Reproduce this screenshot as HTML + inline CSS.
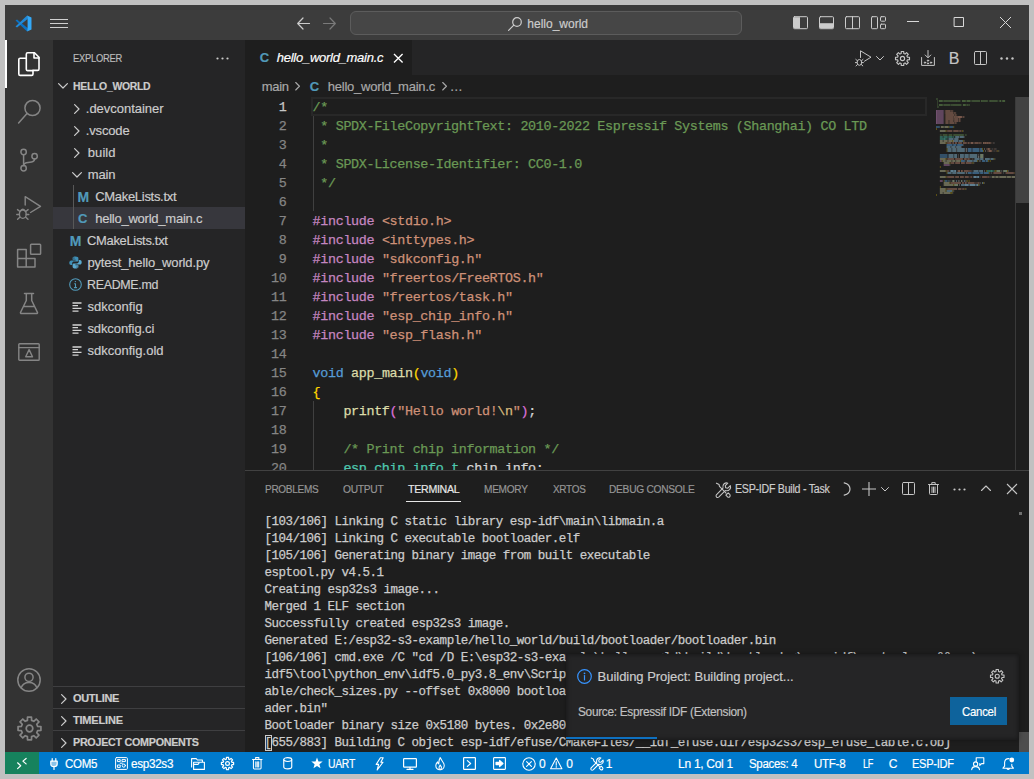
<!DOCTYPE html>
<html lang="en">
<head>
<meta charset="utf-8">
<title>hello_world_main.c - hello_world - Visual Studio Code</title>
<style>
*{box-sizing:border-box;margin:0;padding:0}
html,body{width:1034px;height:779px;overflow:hidden;background:#c1c1c1}
body{font-family:"Liberation Sans",sans-serif;font-size:13px;color:#ccc;position:relative}
.abs{position:absolute}
svg{position:absolute;overflow:visible}
.t{position:absolute;white-space:pre;transform-origin:0 50%;-webkit-text-stroke:.18px}
pre{position:absolute;font-family:"Liberation Mono",monospace;white-space:pre;-webkit-text-stroke:.25px}
#code{left:312.6px;top:98px;font-size:13.4px;line-height:19px;letter-spacing:-0.34px;color:#d4d4d4}
#ln{left:245px;top:98px;width:41.5px;text-align:right;font-size:13.4px;line-height:19px;letter-spacing:-0.34px;color:#858585}
#term{left:264.6px;top:514px;font-size:12.5px;line-height:17px;letter-spacing:-0.5px;color:#ccc}
.c{color:#6a9955}.k{color:#c586c0}.s{color:#ce9178}.b{color:#569cd6}.f{color:#dcdcaa}.y{color:#ffd700}.p{color:#da70d6}.e{color:#d7ba7d}.ty{color:#4ec9b0}.v{color:#9cdcfe}
</style>
</head>
<body>
<div class="abs" style="left:5px;top:5px;width:1024px;height:769px;background:#1e1e1e;"></div>
<div class="abs" style="left:5px;top:5px;width:1024px;height:35px;background:#3c3c3c;"></div>
<div class="abs" style="left:5px;top:40px;width:48px;height:712px;background:#333333;"></div>
<div class="abs" style="left:53px;top:40px;width:192px;height:712px;background:#252526;"></div>
<div class="abs" style="left:245px;top:40px;width:784px;height:35px;background:#252526;"></div>
<div class="abs" style="left:245px;top:40px;width:167px;height:35px;background:#1e1e1e;"></div>
<div class="abs" style="left:5px;top:752px;width:1024px;height:22px;background:#007acc;"></div>
<div class="abs" style="left:5px;top:752px;width:34px;height:22px;background:#16825d;"></div>
<svg style="left:14.5px;top:14.5px" width="17" height="17" viewBox="0 0 100 100" fill="none" stroke="none" stroke-width="1" stroke-linecap="round" stroke-linejoin="round"><path d="M3 32L12 27L74 76L71 97Z" fill="#0a72c4" stroke="none"/><path d="M3 68L12 73L74 24L71 3Z" fill="#2089d8" stroke="none"/><path d="M71 3L97 15V85L71 97L74 72V28Z" fill="#33a9f8" stroke="none"/></svg>
<svg style="left:50px;top:15px" width="18" height="16" viewBox="0 0 18 16" fill="none" stroke="#d0d0d0" stroke-width="1" stroke-linecap="butt" stroke-linejoin="round"><path d="M0 4.5H18M0 8.5H18M0 12.5H18"/></svg>
<svg style="left:297px;top:17px" width="13" height="13" viewBox="0 0 13 13" fill="none" stroke="#cccccc" stroke-width="1.2" stroke-linecap="round" stroke-linejoin="round"><path d="M12.5 6.5H1M6 1L0.7 6.5L6 12"/></svg>
<svg style="left:323px;top:17px" width="13" height="13" viewBox="0 0 13 13" fill="none" stroke="#7a7a7a" stroke-width="1.2" stroke-linecap="round" stroke-linejoin="round"><path d="M0.5 6.5H12M7 1L12.3 6.5L7 12"/></svg>
<div class="abs" style="left:350px;top:11px;width:392px;height:24px;background:#464646;border:1px solid #5c5c5c;border-radius:6px"></div>
<svg style="left:508px;top:16.5px" width="14" height="14" viewBox="0 0 14 14" fill="none" stroke="#cccccc" stroke-width="1.2" stroke-linecap="round" stroke-linejoin="round"><circle cx="9" cy="5" r="4.3"/><path d="M5.8 8.2L0.6 13.4"/></svg>
<span class="t" style="left:527.30px;top:15.6px;font-size:12px;line-height:17px;letter-spacing:-0.003px;color:#cccccc;">hello_world</span>
<svg style="left:792.5px;top:16px" width="15" height="13.4" viewBox="0 0 15 13" fill="none" stroke="#cccccc" stroke-width="1" stroke-linecap="round" stroke-linejoin="round"><rect x=".5" y=".5" width="14" height="12" rx="1"/><path d="M1 1H7V12H1Z" fill="#cccccc" stroke="none"/></svg>
<svg style="left:818.5px;top:16px" width="15" height="13.4" viewBox="0 0 15 13" fill="none" stroke="#cccccc" stroke-width="1" stroke-linecap="round" stroke-linejoin="round"><rect x=".5" y=".5" width="14" height="12" rx="1"/><path d="M1 7H14V12H1Z" fill="#cccccc" stroke="none"/></svg>
<svg style="left:844.5px;top:16px" width="15" height="13.4" viewBox="0 0 15 13" fill="none" stroke="#cccccc" stroke-width="1" stroke-linecap="round" stroke-linejoin="round"><rect x=".5" y=".5" width="14" height="12" rx="1"/><path d="M7.5 .5V12.5"/></svg>
<svg style="left:871px;top:16px" width="15" height="13.4" viewBox="0 0 15 13" fill="none" stroke="#cccccc" stroke-width="1" stroke-linecap="round" stroke-linejoin="round"><rect x=".5" y=".5" width="6" height="12" rx=".8"/><rect x="9.5" y=".5" width="5" height="4.5" rx=".8"/><rect x="9.5" y="8" width="5" height="4.5" rx=".8"/></svg>
<svg style="left:906.5px;top:21px" width="12" height="2" viewBox="0 0 12 2" fill="none" stroke="#d8d8d8" stroke-width="1" stroke-linecap="butt" stroke-linejoin="round"><path d="M0 .5H12"/></svg>
<svg style="left:953.5px;top:17px" width="10" height="10" viewBox="0 0 10 10" fill="none" stroke="#d8d8d8" stroke-width="1" stroke-linecap="round" stroke-linejoin="round"><rect x=".5" y=".5" width="9" height="9"/></svg>
<svg style="left:1000px;top:17px" width="11" height="11" viewBox="0 0 11 11" fill="none" stroke="#d8d8d8" stroke-width="1" stroke-linecap="butt" stroke-linejoin="round"><path d="M0 0L11 11M11 0L0 11"/></svg>
<div class="abs" style="left:5px;top:40px;width:2px;height:48px;background:#ffffff;"></div>
<svg style="left:17px;top:51px" width="24" height="26" viewBox="0 0 24 26" fill="none" stroke="#ffffff" stroke-width="1.6" stroke-linecap="round" stroke-linejoin="round"><path d="M9.3 6.8V3.2Q9.3 1.8 10.7 1.8H17.5L22 6.3V18Q22 19.4 20.6 19.4H16"/><path d="M17 2V7H22"/><path d="M9.3 7.2H3.2Q1.8 7.2 1.8 8.6V23Q1.8 24.4 3.2 24.4H14.6Q16 24.4 16 23V19.6H10.7Q9.3 19.6 9.3 18.2Z"/></svg>
<svg style="left:17px;top:98px" width="26" height="26" viewBox="0 0 26 26" fill="none" stroke="#858585" stroke-width="1.5" stroke-linecap="round" stroke-linejoin="round"><circle cx="15.5" cy="10" r="7.6"/><path d="M10 15.6L1.6 25"/></svg>
<svg style="left:19px;top:147px" width="20" height="26" viewBox="0 0 20 26" fill="none" stroke="#858585" stroke-width="1.5" stroke-linecap="round" stroke-linejoin="round"><circle cx="4.6" cy="5" r="2.7"/><circle cx="15.6" cy="9.2" r="2.7"/><circle cx="4.6" cy="21.2" r="2.7"/><path d="M4.6 7.7V18.5"/><path d="M15.6 11.9Q15.4 14.6 12.6 15L7.4 15.8Q4.8 16.4 4.6 18.5"/></svg>
<svg style="left:16px;top:195px" width="26" height="26" viewBox="0 0 26 26" fill="none" stroke="#858585" stroke-width="1.4" stroke-linecap="round" stroke-linejoin="round"><path d="M9.2 10V1.7L24.5 11.3L14.5 17.5"/><ellipse cx="6.8" cy="19.2" rx="3.4" ry="4.2"/><path d="M3.6 16.3L1.5 14.6M10 16.3L12.1 14.6M3.4 19.5H.8M10.2 19.5H12.8M3.8 22.2L1.6 24.2M9.8 22.2L12 24.2M4.8 15.6Q6.8 12.8 8.8 15.6"/></svg>
<svg style="left:16px;top:243px" width="26" height="25" viewBox="0 0 26 25" fill="none" stroke="#858585" stroke-width="1.5" stroke-linecap="round" stroke-linejoin="round"><path d="M1.6 6.6H10.2V15.4H19V24H1.6ZM1.6 15.4H10.2V24"/><rect x="14.6" y="1.2" width="10" height="10" rx=".8"/></svg>
<svg style="left:19px;top:292px" width="20" height="23" viewBox="0 0 20 23" fill="none" stroke="#858585" stroke-width="1.5" stroke-linecap="round" stroke-linejoin="round"><path d="M5.5 1.5H14.5M7.3 1.5V8.5L1.5 20.5Q1.2 21.6 2.5 21.6H17.5Q18.8 21.6 18.5 20.5L12.7 8.5V1.5M4.5 14.5H15.5"/></svg>
<svg style="left:18px;top:343px" width="22" height="18" viewBox="0 0 22 18" fill="none" stroke="#858585" stroke-width="1.4" stroke-linecap="round" stroke-linejoin="round"><rect x=".8" y=".8" width="20.4" height="16.4" rx=".8"/><path d="M.8 4.6H21.2"/><path d="M11.1 6.6L14.5 13.8H7.7Z"/></svg>
<svg style="left:17px;top:668px" width="24" height="24" viewBox="0 0 24 24" fill="none" stroke="#858585" stroke-width="1.5" stroke-linecap="round" stroke-linejoin="round"><circle cx="12" cy="12" r="11.2"/><circle cx="12" cy="9.3" r="4.1"/><path d="M4.2 19.8Q6 14.6 12 14.6Q18 14.6 19.8 19.8"/></svg>
<svg style="left:16.5px;top:716px" width="25" height="25" viewBox="0 0 25 25" fill="none" stroke="#858585" stroke-width="1.7" stroke-linecap="round" stroke-linejoin="round"><path d="M20.64 10.41L23.93 10.53L23.93 14.47L20.64 14.59L19.73 16.78L21.98 19.19L19.19 21.98L16.78 19.73L14.59 20.64L14.47 23.93L10.53 23.93L10.41 20.64L8.22 19.73L5.81 21.98L3.02 19.19L5.27 16.78L4.36 14.59L1.07 14.47L1.07 10.53L4.36 10.41L5.27 8.22L3.02 5.81L5.81 3.02L8.22 5.27L10.41 4.36L10.53 1.07L14.47 1.07L14.59 4.36L16.78 5.27L19.19 3.02L21.98 5.81L19.73 8.22Z"/><circle cx="12.5" cy="12.5" r="3.3"/></svg>
<span class="t" style="left:73.30px;top:50.7px;font-size:11px;line-height:15px;letter-spacing:-0.300px;color:#bbbbbb;transform:scaleX(0.8520);">EXPLORER</span>
<svg style="left:215.5px;top:57px" width="13" height="3" viewBox="0 0 13 3" fill="#cccccc" stroke="none" stroke-width="1" stroke-linecap="round" stroke-linejoin="round"><circle cx="1.5" cy="1.5" r="1.1"/><circle cx="6.5" cy="1.5" r="1.1"/><circle cx="11.5" cy="1.5" r="1.1"/></svg>
<svg style="left:58px;top:83px" width="10" height="6" viewBox="0 0 10 6" fill="none" stroke="#cccccc" stroke-width="1.2" stroke-linecap="round" stroke-linejoin="round"><path d="M.6 .6L5 5L9.4 .6"/></svg>
<span class="t" style="left:73.30px;top:79.1px;font-size:11px;line-height:15px;letter-spacing:-0.300px;color:#cccccc;font-weight:700;transform:scaleX(0.9476);">HELLO_WORLD</span>
<svg style="left:74px;top:103.5px" width="6" height="10" viewBox="0 0 6 10" fill="none" stroke="#cccccc" stroke-width="1.2" stroke-linecap="round" stroke-linejoin="round"><path d="M.6 .6L5 5L.6 9.4"/></svg>
<span class="t" style="left:85.80px;top:99.9px;font-size:13px;line-height:18px;letter-spacing:-0.027px;color:#cccccc;">.devcontainer</span>
<svg style="left:74px;top:125.5px" width="6" height="10" viewBox="0 0 6 10" fill="none" stroke="#cccccc" stroke-width="1.2" stroke-linecap="round" stroke-linejoin="round"><path d="M.6 .6L5 5L.6 9.4"/></svg>
<span class="t" style="left:85.80px;top:121.9px;font-size:13px;line-height:18px;letter-spacing:-0.162px;color:#cccccc;">.vscode</span>
<svg style="left:74px;top:147.5px" width="6" height="10" viewBox="0 0 6 10" fill="none" stroke="#cccccc" stroke-width="1.2" stroke-linecap="round" stroke-linejoin="round"><path d="M.6 .6L5 5L.6 9.4"/></svg>
<span class="t" style="left:87.80px;top:143.9px;font-size:13px;line-height:18px;letter-spacing:0.066px;color:#cccccc;">build</span>
<svg style="left:71.5px;top:172px" width="10" height="6" viewBox="0 0 10 6" fill="none" stroke="#cccccc" stroke-width="1.2" stroke-linecap="round" stroke-linejoin="round"><path d="M.6 .6L5 5L9.4 .6"/></svg>
<span class="t" style="left:87.80px;top:165.9px;font-size:13px;line-height:18px;letter-spacing:-0.149px;color:#cccccc;">main</span>
<div class="abs" style="left:53px;top:207px;width:192px;height:22px;background:#37373d;"></div>
<div class="abs" style="left:73px;top:185px;width:1px;height:44px;background:#585858;"></div>
<span class="t" style="left:77.50px;top:186.8px;font-size:14px;line-height:20px;letter-spacing:0.000px;color:#519aba;font-weight:700;">M</span>
<span class="t" style="left:95.20px;top:187.9px;font-size:13px;line-height:18px;letter-spacing:-0.300px;color:#cccccc;">CMakeLists.txt</span>
<span class="t" style="left:78.10px;top:210.1px;font-size:13px;line-height:18px;letter-spacing:0.000px;color:#519aba;font-weight:700;">C</span>
<span class="t" style="left:95.20px;top:209.9px;font-size:13px;line-height:18px;letter-spacing:-0.240px;color:#cccccc;">hello_world_main.c</span>
<span class="t" style="left:69.70px;top:230.8px;font-size:14px;line-height:20px;letter-spacing:0.000px;color:#519aba;font-weight:700;">M</span>
<span class="t" style="left:87.40px;top:231.9px;font-size:13px;line-height:18px;letter-spacing:-0.300px;color:#cccccc;transform:scaleX(0.9947);">CMakeLists.txt</span>
<svg style="left:69px;top:255.5px" width="13" height="13" viewBox="0 0 13 13" fill="none" stroke="none" stroke-width="1" stroke-linecap="round" stroke-linejoin="round"><path d="M6.4 .4C3.6 .4 3.6 1.6 3.6 2.4V3.8H6.6V4.4H2.2C1 4.4 .3 5.4 .3 6.8C.3 8.2 1 9 2 9H3.2V7.4C3.2 6.2 4.2 5.6 5 5.6H8C8.9 5.6 9.4 5 9.4 4.2V2.2C9.4 1.2 8.6 .4 6.4 .4ZM4.9 1.4A.6 .6 0 1 1 4.9 2.6A.6 .6 0 1 1 4.9 1.4Z" fill="#3f8fb6" fill-rule="evenodd" stroke="none"/><path d="M6.6 12.6C9.4 12.6 9.4 11.4 9.4 10.6V9.2H6.4V8.6H10.8C12 8.6 12.7 7.6 12.7 6.2C12.7 4.8 12 4 11 4H9.8V5.6C9.8 6.8 8.8 7.4 8 7.4H5C4.1 7.4 3.6 8 3.6 8.8V10.8C3.6 11.8 4.4 12.6 6.6 12.6ZM8.1 11.6A.6 .6 0 1 1 8.1 10.4A.6 .6 0 1 1 8.1 11.6Z" fill="#5aa9cf" fill-rule="evenodd" stroke="none"/></svg>
<span class="t" style="left:87.40px;top:253.9px;font-size:13px;line-height:18px;letter-spacing:-0.146px;color:#cccccc;">pytest_hello_world.py</span>
<svg style="left:69px;top:278px" width="13" height="13" viewBox="0 0 13 13" fill="none" stroke="#519aba" stroke-width="1.1" stroke-linecap="round" stroke-linejoin="round"><circle cx="6.5" cy="6.5" r="5.8"/><path d="M6.5 5.8V9.6M5.4 9.6H7.6M5.6 5.8H6.5"/><circle cx="6.4" cy="3.6" r=".7" fill="#519aba" stroke="none"/></svg>
<span class="t" style="left:87.15px;top:275.9px;font-size:13px;line-height:18px;letter-spacing:-0.300px;color:#cccccc;transform:scaleX(0.9544);">README.md</span>
<svg style="left:72px;top:301.5px" width="10" height="10" viewBox="0 0 10 10" fill="none" stroke="#d4d4d4" stroke-width="1.3" stroke-linecap="butt" stroke-linejoin="round"><path d="M.5 1H9.5M.5 3.7H6M.5 6.4H9.5M.5 9.1H6.5"/></svg>
<span class="t" style="left:87.40px;top:297.9px;font-size:13px;line-height:18px;letter-spacing:0.039px;color:#cccccc;">sdkconfig</span>
<svg style="left:72px;top:323.5px" width="10" height="10" viewBox="0 0 10 10" fill="none" stroke="#d4d4d4" stroke-width="1.3" stroke-linecap="butt" stroke-linejoin="round"><path d="M.5 1H9.5M.5 3.7H6M.5 6.4H9.5M.5 9.1H6.5"/></svg>
<span class="t" style="left:87.40px;top:319.9px;font-size:13px;line-height:18px;letter-spacing:-0.085px;color:#cccccc;">sdkconfig.ci</span>
<svg style="left:72px;top:345.5px" width="10" height="10" viewBox="0 0 10 10" fill="none" stroke="#d4d4d4" stroke-width="1.3" stroke-linecap="butt" stroke-linejoin="round"><path d="M.5 1H9.5M.5 3.7H6M.5 6.4H9.5M.5 9.1H6.5"/></svg>
<span class="t" style="left:87.40px;top:341.9px;font-size:13px;line-height:18px;letter-spacing:0.021px;color:#cccccc;">sdkconfig.old</span>
<div class="abs" style="left:53px;top:686px;width:192px;height:1px;background:#3f3f41;"></div>
<div class="abs" style="left:53px;top:708px;width:192px;height:1px;background:#3f3f41;"></div>
<div class="abs" style="left:53px;top:730px;width:192px;height:1px;background:#3f3f41;"></div>
<svg style="left:61px;top:693.5px" width="6" height="10" viewBox="0 0 6 10" fill="none" stroke="#cccccc" stroke-width="1.2" stroke-linecap="round" stroke-linejoin="round"><path d="M.6 .6L5 5L.6 9.4"/></svg>
<span class="t" style="left:72.90px;top:691.4px;font-size:11px;line-height:15px;letter-spacing:-0.300px;color:#cccccc;font-weight:700;">OUTLINE</span>
<svg style="left:61px;top:715.5px" width="6" height="10" viewBox="0 0 6 10" fill="none" stroke="#cccccc" stroke-width="1.2" stroke-linecap="round" stroke-linejoin="round"><path d="M.6 .6L5 5L.6 9.4"/></svg>
<span class="t" style="left:72.90px;top:713.4px;font-size:11px;line-height:15px;letter-spacing:-0.171px;color:#cccccc;font-weight:700;">TIMELINE</span>
<svg style="left:61px;top:737.5px" width="6" height="10" viewBox="0 0 6 10" fill="none" stroke="#cccccc" stroke-width="1.2" stroke-linecap="round" stroke-linejoin="round"><path d="M.6 .6L5 5L.6 9.4"/></svg>
<span class="t" style="left:72.90px;top:735.4px;font-size:11px;line-height:15px;letter-spacing:-0.300px;color:#cccccc;font-weight:700;transform:scaleX(0.9789);">PROJECT COMPONENTS</span>
<span class="t" style="left:259.80px;top:49.4px;font-size:13px;line-height:18px;letter-spacing:0.000px;color:#519aba;font-weight:700;">C</span>
<span class="t" style="left:276.80px;top:49.1px;font-size:13px;line-height:18px;letter-spacing:-0.269px;color:#ffffff;font-style:italic;">hello_world_main.c</span>
<svg style="left:393.7px;top:54px" width="8.6" height="8.6" viewBox="0 0 9 9" fill="none" stroke="#ffffff" stroke-width="1.4" stroke-linecap="butt" stroke-linejoin="round"><path d="M0 0L9 9M9 0L0 9"/></svg>
<span class="t" style="left:261.70px;top:77.5px;font-size:13px;line-height:18px;letter-spacing:-0.282px;color:#a9a9a9;">main</span>
<svg style="left:295px;top:82px" width="5.5" height="8.5" viewBox="0 0 6 10" fill="none" stroke="#a9a9a9" stroke-width="1.3" stroke-linecap="round" stroke-linejoin="round"><path d="M.6 .6L5 5L.6 9.4"/></svg>
<span class="t" style="left:309.80px;top:77.5px;font-size:13px;line-height:18px;letter-spacing:0.000px;color:#519aba;font-weight:700;">C</span>
<span class="t" style="left:327.70px;top:77.5px;font-size:13px;line-height:18px;letter-spacing:-0.217px;color:#a9a9a9;">hello_world_main.c</span>
<svg style="left:441.5px;top:82px" width="5.5" height="8.5" viewBox="0 0 6 10" fill="none" stroke="#a9a9a9" stroke-width="1.3" stroke-linecap="round" stroke-linejoin="round"><path d="M.6 .6L5 5L.6 9.4"/></svg>
<span class="t" style="left:449.80px;top:77.5px;font-size:13px;line-height:18px;letter-spacing:0.000px;color:#a9a9a9;">…</span>
<svg style="left:855px;top:50px" width="17" height="17" viewBox="0 0 17 17" fill="none" stroke="#c5c5c5" stroke-width="1" stroke-linecap="round" stroke-linejoin="round"><path d="M5.5 7.5V.8L16 7.2L9.5 11.2"/><ellipse cx="4.4" cy="12.4" rx="2.3" ry="2.9"/><path d="M2.2 10.6L.8 9.4M6.6 10.6L8 9.4M2 12.6H.4M6.8 12.6H8.4M2.4 14.6L1 15.9M6.4 14.6L7.8 15.9"/></svg>
<svg style="left:876px;top:56px" width="8" height="5" viewBox="0 0 8 5" fill="none" stroke="#c5c5c5" stroke-width="1" stroke-linecap="round" stroke-linejoin="round"><path d="M.5 .5L4 4L7.5 .5"/></svg>
<svg style="left:894.5px;top:50.5px" width="15" height="15" viewBox="0 0 15 15" fill="none" stroke="#c5c5c5" stroke-width="1.15" stroke-linecap="round" stroke-linejoin="round"><path d="M12.43 6.19L14.49 6.26L14.49 8.74L12.43 8.81L11.91 10.06L13.32 11.56L11.56 13.32L10.06 11.91L8.81 12.43L8.74 14.49L6.26 14.49L6.19 12.43L4.94 11.91L3.44 13.32L1.68 11.56L3.09 10.06L2.57 8.81L0.51 8.74L0.51 6.26L2.57 6.19L3.09 4.94L1.68 3.44L3.44 1.68L4.94 3.09L6.19 2.57L6.26 0.51L8.74 0.51L8.81 2.57L10.06 3.09L11.56 1.68L13.32 3.44L11.91 4.94Z"/><circle cx="7.5" cy="7.5" r="2.1"/></svg>
<svg style="left:920.5px;top:50px" width="14" height="16" viewBox="0 0 14 16" fill="none" stroke="#c5c5c5" stroke-width="1" stroke-linecap="round" stroke-linejoin="round"><path d="M7 .5V7.5M4.2 5L7 7.8L9.8 5M.6 7.5V15.4H13.4V7.5"/><circle cx="4" cy="12.6" r=".7" fill="#c5c5c5"/><circle cx="7" cy="10.6" r=".7" fill="#c5c5c5"/><circle cx="10" cy="12.6" r=".7" fill="#c5c5c5"/><circle cx="7" cy="13.4" r=".6" fill="#c5c5c5"/></svg>
<span class="t" style="left:948.85px;top:47.6px;font-size:16px;line-height:22px;letter-spacing:0.000px;color:#c5c5c5;">B</span>
<svg style="left:974px;top:51px" width="13" height="14" viewBox="0 0 13 14" fill="none" stroke="#c5c5c5" stroke-width="1" stroke-linecap="round" stroke-linejoin="round"><rect x=".5" y=".5" width="12" height="13" rx="1"/><path d="M6.5 .5V13.5"/></svg>
<svg style="left:999.5px;top:57px" width="13" height="3" viewBox="0 0 13 3" fill="#c5c5c5" stroke="none" stroke-width="1" stroke-linecap="round" stroke-linejoin="round"><circle cx="1.5" cy="1.5" r="1.2"/><circle cx="7" cy="1.5" r="1.2"/><circle cx="12.5" cy="1.5" r="1.2"/></svg>
<div class="abs" style="left:311px;top:97px;width:616px;height:19px;border:2px solid #282828"></div>
<div class="abs" style="left:313px;top:116px;width:1px;height:95px;background:#404040;"></div>
<div class="abs" style="left:313px;top:401px;width:1px;height:69px;background:#404040;"></div>
<pre id="code"><span class="c">/*</span>
<span class="c"> * SPDX-FileCopyrightText: 2010-2022 Espressif Systems (Shanghai) CO LTD</span>
<span class="c"> *</span>
<span class="c"> * SPDX-License-Identifier: CC0-1.0</span>
<span class="c"> */</span>

<span class="k">#include</span> <span class="s">&lt;stdio.h&gt;</span>
<span class="k">#include</span> <span class="s">&lt;inttypes.h&gt;</span>
<span class="k">#include</span> <span class="s">&quot;sdkconfig.h&quot;</span>
<span class="k">#include</span> <span class="s">&quot;freertos/FreeRTOS.h&quot;</span>
<span class="k">#include</span> <span class="s">&quot;freertos/task.h&quot;</span>
<span class="k">#include</span> <span class="s">&quot;esp_chip_info.h&quot;</span>
<span class="k">#include</span> <span class="s">&quot;esp_flash.h&quot;</span>

<span class="b">void</span> <span class="f">app_main</span><span class="y">(</span><span class="b">void</span><span class="y">)</span>
<span class="y">{</span>
    <span class="f">printf</span><span class="p">(</span><span class="s">&quot;Hello world!<span class="e">\n</span>&quot;</span><span class="p">)</span>;

<span class="c">    /* Print chip information */</span>
    <span class="ty">esp_chip_info_t</span> chip_info;</pre>
<pre id="ln"><span style="color:#c6c6c6">1</span>
2
3
4
5
6
7
8
9
10
11
12
13
14
15
16
17
18
19
20</pre>
<div class="abs" style="left:935.5px;top:97.5px;width:79.5px;height:110px;overflow:hidden">
<svg style="left:0px;top:0px" width="90" height="110" viewBox="0 0 90 110" fill="none" stroke="none" stroke-width="1" stroke-linecap="round" stroke-linejoin="round" opacity=".8"><rect x="0.00" y="0.2" width="1.92" height="1.6" fill="#6a9955" opacity="0.45"/><rect x="0.96" y="2.2" width="0.96" height="1.6" fill="#6a9955" opacity="0.45"/><rect x="2.88" y="2.2" width="3.84" height="1.6" fill="#6a9955" opacity="0.8"/><rect x="6.72" y="2.2" width="0.96" height="1.6" fill="#6a9955" opacity="0.3"/><rect x="7.68" y="2.2" width="0.96" height="1.6" fill="#6a9955" opacity="0.8"/><rect x="8.64" y="2.2" width="2.88" height="1.6" fill="#6a9955" opacity="0.62"/><rect x="11.52" y="2.2" width="0.96" height="1.6" fill="#6a9955" opacity="0.8"/><rect x="12.48" y="2.2" width="7.68" height="1.6" fill="#6a9955" opacity="0.62"/><rect x="20.16" y="2.2" width="0.96" height="1.6" fill="#6a9955" opacity="0.8"/><rect x="21.12" y="2.2" width="2.88" height="1.6" fill="#6a9955" opacity="0.62"/><rect x="24.00" y="2.2" width="0.96" height="1.6" fill="#6a9955" opacity="0.3"/><rect x="25.92" y="2.2" width="3.84" height="1.6" fill="#6a9955" opacity="0.8"/><rect x="29.76" y="2.2" width="0.96" height="1.6" fill="#6a9955" opacity="0.3"/><rect x="30.72" y="2.2" width="3.84" height="1.6" fill="#6a9955" opacity="0.8"/><rect x="35.52" y="2.2" width="0.96" height="1.6" fill="#6a9955" opacity="0.8"/><rect x="36.48" y="2.2" width="7.68" height="1.6" fill="#6a9955" opacity="0.62"/><rect x="45.12" y="2.2" width="0.96" height="1.6" fill="#6a9955" opacity="0.8"/><rect x="46.08" y="2.2" width="5.76" height="1.6" fill="#6a9955" opacity="0.62"/><rect x="52.80" y="2.2" width="0.96" height="1.6" fill="#6a9955" opacity="0.45"/><rect x="53.76" y="2.2" width="0.96" height="1.6" fill="#6a9955" opacity="0.8"/><rect x="54.72" y="2.2" width="6.72" height="1.6" fill="#6a9955" opacity="0.62"/><rect x="61.44" y="2.2" width="0.96" height="1.6" fill="#6a9955" opacity="0.45"/><rect x="63.36" y="2.2" width="1.92" height="1.6" fill="#6a9955" opacity="0.8"/><rect x="66.24" y="2.2" width="2.88" height="1.6" fill="#6a9955" opacity="0.8"/><rect x="0.96" y="4.2" width="0.96" height="1.6" fill="#6a9955" opacity="0.45"/><rect x="0.96" y="6.2" width="0.96" height="1.6" fill="#6a9955" opacity="0.45"/><rect x="2.88" y="6.2" width="3.84" height="1.6" fill="#6a9955" opacity="0.8"/><rect x="6.72" y="6.2" width="0.96" height="1.6" fill="#6a9955" opacity="0.3"/><rect x="7.68" y="6.2" width="0.96" height="1.6" fill="#6a9955" opacity="0.8"/><rect x="8.64" y="6.2" width="5.76" height="1.6" fill="#6a9955" opacity="0.62"/><rect x="14.40" y="6.2" width="0.96" height="1.6" fill="#6a9955" opacity="0.3"/><rect x="15.36" y="6.2" width="0.96" height="1.6" fill="#6a9955" opacity="0.8"/><rect x="16.32" y="6.2" width="8.64" height="1.6" fill="#6a9955" opacity="0.62"/><rect x="24.96" y="6.2" width="0.96" height="1.6" fill="#6a9955" opacity="0.3"/><rect x="26.88" y="6.2" width="2.88" height="1.6" fill="#6a9955" opacity="0.8"/><rect x="29.76" y="6.2" width="0.96" height="1.6" fill="#6a9955" opacity="0.3"/><rect x="30.72" y="6.2" width="0.96" height="1.6" fill="#6a9955" opacity="0.8"/><rect x="31.68" y="6.2" width="0.96" height="1.6" fill="#6a9955" opacity="0.3"/><rect x="32.64" y="6.2" width="0.96" height="1.6" fill="#6a9955" opacity="0.8"/><rect x="0.96" y="8.2" width="1.92" height="1.6" fill="#6a9955" opacity="0.45"/><rect x="0.00" y="12.2" width="0.96" height="1.6" fill="#c586c0" opacity="0.8"/><rect x="0.96" y="12.2" width="6.72" height="1.6" fill="#c586c0" opacity="0.62"/><rect x="8.64" y="12.2" width="0.96" height="1.6" fill="#ce9178" opacity="0.45"/><rect x="9.60" y="12.2" width="4.80" height="1.6" fill="#ce9178" opacity="0.62"/><rect x="14.40" y="12.2" width="0.96" height="1.6" fill="#ce9178" opacity="0.3"/><rect x="15.36" y="12.2" width="0.96" height="1.6" fill="#ce9178" opacity="0.62"/><rect x="16.32" y="12.2" width="0.96" height="1.6" fill="#ce9178" opacity="0.45"/><rect x="0.00" y="14.2" width="0.96" height="1.6" fill="#c586c0" opacity="0.8"/><rect x="0.96" y="14.2" width="6.72" height="1.6" fill="#c586c0" opacity="0.62"/><rect x="8.64" y="14.2" width="0.96" height="1.6" fill="#ce9178" opacity="0.45"/><rect x="9.60" y="14.2" width="7.68" height="1.6" fill="#ce9178" opacity="0.62"/><rect x="17.28" y="14.2" width="0.96" height="1.6" fill="#ce9178" opacity="0.3"/><rect x="18.24" y="14.2" width="0.96" height="1.6" fill="#ce9178" opacity="0.62"/><rect x="19.20" y="14.2" width="0.96" height="1.6" fill="#ce9178" opacity="0.45"/><rect x="0.00" y="16.2" width="0.96" height="1.6" fill="#c586c0" opacity="0.8"/><rect x="0.96" y="16.2" width="6.72" height="1.6" fill="#c586c0" opacity="0.62"/><rect x="8.64" y="16.2" width="0.96" height="1.6" fill="#ce9178" opacity="0.3"/><rect x="9.60" y="16.2" width="8.64" height="1.6" fill="#ce9178" opacity="0.62"/><rect x="18.24" y="16.2" width="0.96" height="1.6" fill="#ce9178" opacity="0.3"/><rect x="19.20" y="16.2" width="0.96" height="1.6" fill="#ce9178" opacity="0.62"/><rect x="20.16" y="16.2" width="0.96" height="1.6" fill="#ce9178" opacity="0.3"/><rect x="0.00" y="18.2" width="0.96" height="1.6" fill="#c586c0" opacity="0.8"/><rect x="0.96" y="18.2" width="6.72" height="1.6" fill="#c586c0" opacity="0.62"/><rect x="8.64" y="18.2" width="0.96" height="1.6" fill="#ce9178" opacity="0.3"/><rect x="9.60" y="18.2" width="7.68" height="1.6" fill="#ce9178" opacity="0.62"/><rect x="17.28" y="18.2" width="0.96" height="1.6" fill="#ce9178" opacity="0.45"/><rect x="18.24" y="18.2" width="0.96" height="1.6" fill="#ce9178" opacity="0.8"/><rect x="19.20" y="18.2" width="2.88" height="1.6" fill="#ce9178" opacity="0.62"/><rect x="22.08" y="18.2" width="3.84" height="1.6" fill="#ce9178" opacity="0.8"/><rect x="25.92" y="18.2" width="0.96" height="1.6" fill="#ce9178" opacity="0.3"/><rect x="26.88" y="18.2" width="0.96" height="1.6" fill="#ce9178" opacity="0.62"/><rect x="27.84" y="18.2" width="0.96" height="1.6" fill="#ce9178" opacity="0.3"/><rect x="0.00" y="20.2" width="0.96" height="1.6" fill="#c586c0" opacity="0.8"/><rect x="0.96" y="20.2" width="6.72" height="1.6" fill="#c586c0" opacity="0.62"/><rect x="8.64" y="20.2" width="0.96" height="1.6" fill="#ce9178" opacity="0.3"/><rect x="9.60" y="20.2" width="7.68" height="1.6" fill="#ce9178" opacity="0.62"/><rect x="17.28" y="20.2" width="0.96" height="1.6" fill="#ce9178" opacity="0.45"/><rect x="18.24" y="20.2" width="3.84" height="1.6" fill="#ce9178" opacity="0.62"/><rect x="22.08" y="20.2" width="0.96" height="1.6" fill="#ce9178" opacity="0.3"/><rect x="23.04" y="20.2" width="0.96" height="1.6" fill="#ce9178" opacity="0.62"/><rect x="24.00" y="20.2" width="0.96" height="1.6" fill="#ce9178" opacity="0.3"/><rect x="0.00" y="22.2" width="0.96" height="1.6" fill="#c586c0" opacity="0.8"/><rect x="0.96" y="22.2" width="6.72" height="1.6" fill="#c586c0" opacity="0.62"/><rect x="8.64" y="22.2" width="0.96" height="1.6" fill="#ce9178" opacity="0.3"/><rect x="9.60" y="22.2" width="2.88" height="1.6" fill="#ce9178" opacity="0.62"/><rect x="12.48" y="22.2" width="0.96" height="1.6" fill="#ce9178" opacity="0.3"/><rect x="13.44" y="22.2" width="3.84" height="1.6" fill="#ce9178" opacity="0.62"/><rect x="17.28" y="22.2" width="0.96" height="1.6" fill="#ce9178" opacity="0.3"/><rect x="18.24" y="22.2" width="3.84" height="1.6" fill="#ce9178" opacity="0.62"/><rect x="22.08" y="22.2" width="0.96" height="1.6" fill="#ce9178" opacity="0.3"/><rect x="23.04" y="22.2" width="0.96" height="1.6" fill="#ce9178" opacity="0.62"/><rect x="24.00" y="22.2" width="0.96" height="1.6" fill="#ce9178" opacity="0.3"/><rect x="0.00" y="24.2" width="0.96" height="1.6" fill="#c586c0" opacity="0.8"/><rect x="0.96" y="24.2" width="6.72" height="1.6" fill="#c586c0" opacity="0.62"/><rect x="8.64" y="24.2" width="0.96" height="1.6" fill="#ce9178" opacity="0.3"/><rect x="9.60" y="24.2" width="2.88" height="1.6" fill="#ce9178" opacity="0.62"/><rect x="12.48" y="24.2" width="0.96" height="1.6" fill="#ce9178" opacity="0.3"/><rect x="13.44" y="24.2" width="4.80" height="1.6" fill="#ce9178" opacity="0.62"/><rect x="18.24" y="24.2" width="0.96" height="1.6" fill="#ce9178" opacity="0.3"/><rect x="19.20" y="24.2" width="0.96" height="1.6" fill="#ce9178" opacity="0.62"/><rect x="20.16" y="24.2" width="0.96" height="1.6" fill="#ce9178" opacity="0.3"/><rect x="0.00" y="28.2" width="3.84" height="1.6" fill="#569cd6" opacity="0.62"/><rect x="4.80" y="28.2" width="2.88" height="1.6" fill="#dcdcaa" opacity="0.62"/><rect x="7.68" y="28.2" width="0.96" height="1.6" fill="#dcdcaa" opacity="0.3"/><rect x="8.64" y="28.2" width="3.84" height="1.6" fill="#dcdcaa" opacity="0.62"/><rect x="12.48" y="28.2" width="0.96" height="1.6" fill="#ffd700" opacity="0.45"/><rect x="13.44" y="28.2" width="3.84" height="1.6" fill="#569cd6" opacity="0.62"/><rect x="17.28" y="28.2" width="0.96" height="1.6" fill="#ffd700" opacity="0.45"/><rect x="0.00" y="30.2" width="0.96" height="1.6" fill="#ffd700" opacity="0.45"/><rect x="3.84" y="32.2" width="5.76" height="1.6" fill="#dcdcaa" opacity="0.62"/><rect x="9.60" y="32.2" width="0.96" height="1.6" fill="#ffd700" opacity="0.45"/><rect x="10.56" y="32.2" width="0.96" height="1.6" fill="#ce9178" opacity="0.3"/><rect x="11.52" y="32.2" width="0.96" height="1.6" fill="#ce9178" opacity="0.8"/><rect x="12.48" y="32.2" width="3.84" height="1.6" fill="#ce9178" opacity="0.62"/><rect x="17.28" y="32.2" width="4.80" height="1.6" fill="#ce9178" opacity="0.62"/><rect x="22.08" y="32.2" width="1.92" height="1.6" fill="#ce9178" opacity="0.45"/><rect x="24.00" y="32.2" width="0.96" height="1.6" fill="#ce9178" opacity="0.62"/><rect x="24.96" y="32.2" width="0.96" height="1.6" fill="#ce9178" opacity="0.3"/><rect x="25.92" y="32.2" width="0.96" height="1.6" fill="#ffd700" opacity="0.45"/><rect x="26.88" y="32.2" width="0.96" height="1.6" fill="#d4d4d4" opacity="0.3"/><rect x="3.84" y="36.2" width="1.92" height="1.6" fill="#6a9955" opacity="0.45"/><rect x="6.72" y="36.2" width="0.96" height="1.6" fill="#6a9955" opacity="0.8"/><rect x="7.68" y="36.2" width="3.84" height="1.6" fill="#6a9955" opacity="0.62"/><rect x="12.48" y="36.2" width="3.84" height="1.6" fill="#6a9955" opacity="0.62"/><rect x="17.28" y="36.2" width="10.56" height="1.6" fill="#6a9955" opacity="0.62"/><rect x="28.80" y="36.2" width="1.92" height="1.6" fill="#6a9955" opacity="0.45"/><rect x="3.84" y="38.2" width="2.88" height="1.6" fill="#4ec9b0" opacity="0.62"/><rect x="6.72" y="38.2" width="0.96" height="1.6" fill="#4ec9b0" opacity="0.3"/><rect x="7.68" y="38.2" width="3.84" height="1.6" fill="#4ec9b0" opacity="0.62"/><rect x="11.52" y="38.2" width="0.96" height="1.6" fill="#4ec9b0" opacity="0.3"/><rect x="12.48" y="38.2" width="3.84" height="1.6" fill="#4ec9b0" opacity="0.62"/><rect x="16.32" y="38.2" width="0.96" height="1.6" fill="#4ec9b0" opacity="0.3"/><rect x="17.28" y="38.2" width="0.96" height="1.6" fill="#4ec9b0" opacity="0.62"/><rect x="19.20" y="38.2" width="3.84" height="1.6" fill="#9cdcfe" opacity="0.62"/><rect x="23.04" y="38.2" width="0.96" height="1.6" fill="#9cdcfe" opacity="0.3"/><rect x="24.00" y="38.2" width="3.84" height="1.6" fill="#9cdcfe" opacity="0.62"/><rect x="27.84" y="38.2" width="0.96" height="1.6" fill="#d4d4d4" opacity="0.3"/><rect x="3.84" y="40.2" width="3.84" height="1.6" fill="#4ec9b0" opacity="0.62"/><rect x="7.68" y="40.2" width="1.92" height="1.6" fill="#4ec9b0" opacity="0.8"/><rect x="9.60" y="40.2" width="0.96" height="1.6" fill="#4ec9b0" opacity="0.3"/><rect x="10.56" y="40.2" width="0.96" height="1.6" fill="#4ec9b0" opacity="0.62"/><rect x="12.48" y="40.2" width="4.80" height="1.6" fill="#9cdcfe" opacity="0.62"/><rect x="17.28" y="40.2" width="0.96" height="1.6" fill="#9cdcfe" opacity="0.3"/><rect x="18.24" y="40.2" width="3.84" height="1.6" fill="#9cdcfe" opacity="0.62"/><rect x="22.08" y="40.2" width="0.96" height="1.6" fill="#d4d4d4" opacity="0.3"/><rect x="3.84" y="42.2" width="2.88" height="1.6" fill="#dcdcaa" opacity="0.62"/><rect x="6.72" y="42.2" width="0.96" height="1.6" fill="#dcdcaa" opacity="0.3"/><rect x="7.68" y="42.2" width="3.84" height="1.6" fill="#dcdcaa" opacity="0.62"/><rect x="11.52" y="42.2" width="0.96" height="1.6" fill="#dcdcaa" opacity="0.3"/><rect x="12.48" y="42.2" width="3.84" height="1.6" fill="#dcdcaa" opacity="0.62"/><rect x="16.32" y="42.2" width="0.96" height="1.6" fill="#ffd700" opacity="0.45"/><rect x="17.28" y="42.2" width="0.96" height="1.6" fill="#d4d4d4" opacity="0.8"/><rect x="18.24" y="42.2" width="3.84" height="1.6" fill="#9cdcfe" opacity="0.62"/><rect x="22.08" y="42.2" width="0.96" height="1.6" fill="#9cdcfe" opacity="0.3"/><rect x="23.04" y="42.2" width="3.84" height="1.6" fill="#9cdcfe" opacity="0.62"/><rect x="26.88" y="42.2" width="0.96" height="1.6" fill="#ffd700" opacity="0.45"/><rect x="27.84" y="42.2" width="0.96" height="1.6" fill="#d4d4d4" opacity="0.3"/><rect x="3.84" y="44.2" width="5.76" height="1.6" fill="#dcdcaa" opacity="0.62"/><rect x="9.60" y="44.2" width="0.96" height="1.6" fill="#ffd700" opacity="0.45"/><rect x="10.56" y="44.2" width="0.96" height="1.6" fill="#ce9178" opacity="0.3"/><rect x="11.52" y="44.2" width="0.96" height="1.6" fill="#ce9178" opacity="0.8"/><rect x="12.48" y="44.2" width="2.88" height="1.6" fill="#ce9178" opacity="0.62"/><rect x="16.32" y="44.2" width="1.92" height="1.6" fill="#ce9178" opacity="0.62"/><rect x="19.20" y="44.2" width="0.96" height="1.6" fill="#ce9178" opacity="0.8"/><rect x="20.16" y="44.2" width="0.96" height="1.6" fill="#ce9178" opacity="0.62"/><rect x="22.08" y="44.2" width="3.84" height="1.6" fill="#ce9178" opacity="0.62"/><rect x="26.88" y="44.2" width="3.84" height="1.6" fill="#ce9178" opacity="0.62"/><rect x="31.68" y="44.2" width="0.96" height="1.6" fill="#ce9178" opacity="0.8"/><rect x="32.64" y="44.2" width="0.96" height="1.6" fill="#ce9178" opacity="0.62"/><rect x="34.56" y="44.2" width="2.88" height="1.6" fill="#ce9178" opacity="0.8"/><rect x="38.40" y="44.2" width="3.84" height="1.6" fill="#ce9178" opacity="0.62"/><rect x="42.24" y="44.2" width="0.96" height="1.6" fill="#ce9178" opacity="0.45"/><rect x="43.20" y="44.2" width="0.96" height="1.6" fill="#ce9178" opacity="0.62"/><rect x="44.16" y="44.2" width="0.96" height="1.6" fill="#ce9178" opacity="0.45"/><rect x="45.12" y="44.2" width="0.96" height="1.6" fill="#ce9178" opacity="0.3"/><rect x="47.04" y="44.2" width="0.96" height="1.6" fill="#ce9178" opacity="0.8"/><rect x="48.00" y="44.2" width="0.96" height="1.6" fill="#ce9178" opacity="0.62"/><rect x="48.96" y="44.2" width="0.96" height="1.6" fill="#ce9178" opacity="0.8"/><rect x="49.92" y="44.2" width="0.96" height="1.6" fill="#ce9178" opacity="0.62"/><rect x="50.88" y="44.2" width="0.96" height="1.6" fill="#ce9178" opacity="0.8"/><rect x="51.84" y="44.2" width="0.96" height="1.6" fill="#ce9178" opacity="0.62"/><rect x="52.80" y="44.2" width="0.96" height="1.6" fill="#ce9178" opacity="0.8"/><rect x="53.76" y="44.2" width="0.96" height="1.6" fill="#ce9178" opacity="0.62"/><rect x="54.72" y="44.2" width="0.96" height="1.6" fill="#ce9178" opacity="0.3"/><rect x="56.64" y="44.2" width="0.96" height="1.6" fill="#ce9178" opacity="0.3"/><rect x="57.60" y="44.2" width="0.96" height="1.6" fill="#d4d4d4" opacity="0.3"/><rect x="10.56" y="46.2" width="5.76" height="1.6" fill="#569cd6" opacity="0.8"/><rect x="16.32" y="46.2" width="0.96" height="1.6" fill="#569cd6" opacity="0.3"/><rect x="17.28" y="46.2" width="2.88" height="1.6" fill="#569cd6" opacity="0.8"/><rect x="20.16" y="46.2" width="0.96" height="1.6" fill="#569cd6" opacity="0.3"/><rect x="21.12" y="46.2" width="5.76" height="1.6" fill="#569cd6" opacity="0.8"/><rect x="26.88" y="46.2" width="0.96" height="1.6" fill="#d4d4d4" opacity="0.3"/><rect x="10.56" y="48.2" width="3.84" height="1.6" fill="#9cdcfe" opacity="0.62"/><rect x="14.40" y="48.2" width="0.96" height="1.6" fill="#9cdcfe" opacity="0.3"/><rect x="15.36" y="48.2" width="3.84" height="1.6" fill="#9cdcfe" opacity="0.62"/><rect x="19.20" y="48.2" width="0.96" height="1.6" fill="#d4d4d4" opacity="0.3"/><rect x="20.16" y="48.2" width="4.80" height="1.6" fill="#9cdcfe" opacity="0.62"/><rect x="24.96" y="48.2" width="0.96" height="1.6" fill="#d4d4d4" opacity="0.3"/><rect x="10.56" y="50.2" width="0.96" height="1.6" fill="#ffd700" opacity="0.45"/><rect x="11.52" y="50.2" width="3.84" height="1.6" fill="#9cdcfe" opacity="0.62"/><rect x="15.36" y="50.2" width="0.96" height="1.6" fill="#9cdcfe" opacity="0.3"/><rect x="16.32" y="50.2" width="3.84" height="1.6" fill="#9cdcfe" opacity="0.62"/><rect x="20.16" y="50.2" width="0.96" height="1.6" fill="#d4d4d4" opacity="0.3"/><rect x="21.12" y="50.2" width="7.68" height="1.6" fill="#9cdcfe" opacity="0.62"/><rect x="29.76" y="50.2" width="0.96" height="1.6" fill="#d4d4d4" opacity="0.8"/><rect x="31.68" y="50.2" width="3.84" height="1.6" fill="#569cd6" opacity="0.8"/><rect x="35.52" y="50.2" width="0.96" height="1.6" fill="#569cd6" opacity="0.3"/><rect x="36.48" y="50.2" width="6.72" height="1.6" fill="#569cd6" opacity="0.8"/><rect x="43.20" y="50.2" width="0.96" height="1.6" fill="#569cd6" opacity="0.3"/><rect x="44.16" y="50.2" width="1.92" height="1.6" fill="#569cd6" opacity="0.8"/><rect x="46.08" y="50.2" width="0.96" height="1.6" fill="#ffd700" opacity="0.45"/><rect x="48.00" y="50.2" width="0.96" height="1.6" fill="#d4d4d4" opacity="0.45"/><rect x="49.92" y="50.2" width="0.96" height="1.6" fill="#ce9178" opacity="0.3"/><rect x="50.88" y="50.2" width="0.96" height="1.6" fill="#ce9178" opacity="0.45"/><rect x="51.84" y="50.2" width="1.92" height="1.6" fill="#ce9178" opacity="0.8"/><rect x="53.76" y="50.2" width="0.96" height="1.6" fill="#ce9178" opacity="0.3"/><rect x="55.68" y="50.2" width="0.96" height="1.6" fill="#d4d4d4" opacity="0.3"/><rect x="57.60" y="50.2" width="1.92" height="1.6" fill="#ce9178" opacity="0.3"/><rect x="59.52" y="50.2" width="0.96" height="1.6" fill="#d4d4d4" opacity="0.3"/><rect x="10.56" y="52.2" width="0.96" height="1.6" fill="#ffd700" opacity="0.45"/><rect x="11.52" y="52.2" width="3.84" height="1.6" fill="#9cdcfe" opacity="0.62"/><rect x="15.36" y="52.2" width="0.96" height="1.6" fill="#9cdcfe" opacity="0.3"/><rect x="16.32" y="52.2" width="3.84" height="1.6" fill="#9cdcfe" opacity="0.62"/><rect x="20.16" y="52.2" width="0.96" height="1.6" fill="#d4d4d4" opacity="0.3"/><rect x="21.12" y="52.2" width="7.68" height="1.6" fill="#9cdcfe" opacity="0.62"/><rect x="29.76" y="52.2" width="0.96" height="1.6" fill="#d4d4d4" opacity="0.8"/><rect x="31.68" y="52.2" width="3.84" height="1.6" fill="#569cd6" opacity="0.8"/><rect x="35.52" y="52.2" width="0.96" height="1.6" fill="#569cd6" opacity="0.3"/><rect x="36.48" y="52.2" width="6.72" height="1.6" fill="#569cd6" opacity="0.8"/><rect x="43.20" y="52.2" width="0.96" height="1.6" fill="#569cd6" opacity="0.3"/><rect x="44.16" y="52.2" width="2.88" height="1.6" fill="#569cd6" opacity="0.8"/><rect x="47.04" y="52.2" width="0.96" height="1.6" fill="#ffd700" opacity="0.45"/><rect x="48.96" y="52.2" width="0.96" height="1.6" fill="#d4d4d4" opacity="0.45"/><rect x="50.88" y="52.2" width="0.96" height="1.6" fill="#ce9178" opacity="0.3"/><rect x="51.84" y="52.2" width="0.96" height="1.6" fill="#ce9178" opacity="0.45"/><rect x="52.80" y="52.2" width="2.88" height="1.6" fill="#ce9178" opacity="0.8"/><rect x="55.68" y="52.2" width="0.96" height="1.6" fill="#ce9178" opacity="0.3"/><rect x="57.60" y="52.2" width="0.96" height="1.6" fill="#d4d4d4" opacity="0.3"/><rect x="59.52" y="52.2" width="1.92" height="1.6" fill="#ce9178" opacity="0.3"/><rect x="61.44" y="52.2" width="0.96" height="1.6" fill="#ffd700" opacity="0.45"/><rect x="62.40" y="52.2" width="0.96" height="1.6" fill="#d4d4d4" opacity="0.3"/><rect x="3.84" y="56.2" width="7.68" height="1.6" fill="#569cd6" opacity="0.62"/><rect x="12.48" y="56.2" width="4.80" height="1.6" fill="#9cdcfe" opacity="0.62"/><rect x="17.28" y="56.2" width="0.96" height="1.6" fill="#9cdcfe" opacity="0.3"/><rect x="18.24" y="56.2" width="2.88" height="1.6" fill="#9cdcfe" opacity="0.62"/><rect x="22.08" y="56.2" width="0.96" height="1.6" fill="#d4d4d4" opacity="0.3"/><rect x="24.00" y="56.2" width="3.84" height="1.6" fill="#9cdcfe" opacity="0.62"/><rect x="27.84" y="56.2" width="0.96" height="1.6" fill="#9cdcfe" opacity="0.3"/><rect x="28.80" y="56.2" width="3.84" height="1.6" fill="#9cdcfe" opacity="0.62"/><rect x="32.64" y="56.2" width="0.96" height="1.6" fill="#d4d4d4" opacity="0.3"/><rect x="33.60" y="56.2" width="7.68" height="1.6" fill="#9cdcfe" opacity="0.62"/><rect x="42.24" y="56.2" width="0.96" height="1.6" fill="#d4d4d4" opacity="0.45"/><rect x="44.16" y="56.2" width="2.88" height="1.6" fill="#b5cea8" opacity="0.8"/><rect x="47.04" y="56.2" width="0.96" height="1.6" fill="#d4d4d4" opacity="0.3"/><rect x="3.84" y="58.2" width="7.68" height="1.6" fill="#569cd6" opacity="0.62"/><rect x="12.48" y="58.2" width="4.80" height="1.6" fill="#9cdcfe" opacity="0.62"/><rect x="17.28" y="58.2" width="0.96" height="1.6" fill="#9cdcfe" opacity="0.3"/><rect x="18.24" y="58.2" width="2.88" height="1.6" fill="#9cdcfe" opacity="0.62"/><rect x="22.08" y="58.2" width="0.96" height="1.6" fill="#d4d4d4" opacity="0.3"/><rect x="24.00" y="58.2" width="3.84" height="1.6" fill="#9cdcfe" opacity="0.62"/><rect x="27.84" y="58.2" width="0.96" height="1.6" fill="#9cdcfe" opacity="0.3"/><rect x="28.80" y="58.2" width="3.84" height="1.6" fill="#9cdcfe" opacity="0.62"/><rect x="32.64" y="58.2" width="0.96" height="1.6" fill="#d4d4d4" opacity="0.3"/><rect x="33.60" y="58.2" width="7.68" height="1.6" fill="#9cdcfe" opacity="0.62"/><rect x="42.24" y="58.2" width="0.96" height="1.6" fill="#d4d4d4" opacity="0.8"/><rect x="44.16" y="58.2" width="2.88" height="1.6" fill="#b5cea8" opacity="0.8"/><rect x="47.04" y="58.2" width="0.96" height="1.6" fill="#d4d4d4" opacity="0.3"/><rect x="3.84" y="60.2" width="5.76" height="1.6" fill="#dcdcaa" opacity="0.62"/><rect x="9.60" y="60.2" width="0.96" height="1.6" fill="#ffd700" opacity="0.45"/><rect x="10.56" y="60.2" width="0.96" height="1.6" fill="#ce9178" opacity="0.3"/><rect x="11.52" y="60.2" width="6.72" height="1.6" fill="#ce9178" opacity="0.62"/><rect x="19.20" y="60.2" width="7.68" height="1.6" fill="#ce9178" opacity="0.62"/><rect x="27.84" y="60.2" width="0.96" height="1.6" fill="#ce9178" opacity="0.62"/><rect x="28.80" y="60.2" width="0.96" height="1.6" fill="#ce9178" opacity="0.8"/><rect x="29.76" y="60.2" width="0.96" height="1.6" fill="#ce9178" opacity="0.62"/><rect x="30.72" y="60.2" width="0.96" height="1.6" fill="#ce9178" opacity="0.3"/><rect x="31.68" y="60.2" width="0.96" height="1.6" fill="#ce9178" opacity="0.8"/><rect x="32.64" y="60.2" width="0.96" height="1.6" fill="#ce9178" opacity="0.62"/><rect x="33.60" y="60.2" width="0.96" height="1.6" fill="#ce9178" opacity="0.3"/><rect x="35.52" y="60.2" width="0.96" height="1.6" fill="#ce9178" opacity="0.3"/><rect x="36.48" y="60.2" width="0.96" height="1.6" fill="#d4d4d4" opacity="0.3"/><rect x="38.40" y="60.2" width="4.80" height="1.6" fill="#9cdcfe" opacity="0.62"/><rect x="43.20" y="60.2" width="0.96" height="1.6" fill="#9cdcfe" opacity="0.3"/><rect x="44.16" y="60.2" width="2.88" height="1.6" fill="#9cdcfe" opacity="0.62"/><rect x="47.04" y="60.2" width="0.96" height="1.6" fill="#d4d4d4" opacity="0.3"/><rect x="48.96" y="60.2" width="4.80" height="1.6" fill="#9cdcfe" opacity="0.62"/><rect x="53.76" y="60.2" width="0.96" height="1.6" fill="#9cdcfe" opacity="0.3"/><rect x="54.72" y="60.2" width="2.88" height="1.6" fill="#9cdcfe" opacity="0.62"/><rect x="57.60" y="60.2" width="0.96" height="1.6" fill="#ffd700" opacity="0.45"/><rect x="58.56" y="60.2" width="0.96" height="1.6" fill="#d4d4d4" opacity="0.3"/><rect x="3.84" y="62.2" width="1.92" height="1.6" fill="#c586c0" opacity="0.62"/><rect x="5.76" y="62.2" width="0.96" height="1.6" fill="#ffd700" opacity="0.45"/><rect x="6.72" y="62.2" width="2.88" height="1.6" fill="#dcdcaa" opacity="0.62"/><rect x="9.60" y="62.2" width="0.96" height="1.6" fill="#dcdcaa" opacity="0.3"/><rect x="10.56" y="62.2" width="4.80" height="1.6" fill="#dcdcaa" opacity="0.62"/><rect x="15.36" y="62.2" width="0.96" height="1.6" fill="#dcdcaa" opacity="0.3"/><rect x="16.32" y="62.2" width="2.88" height="1.6" fill="#dcdcaa" opacity="0.62"/><rect x="19.20" y="62.2" width="0.96" height="1.6" fill="#dcdcaa" opacity="0.3"/><rect x="20.16" y="62.2" width="3.84" height="1.6" fill="#dcdcaa" opacity="0.62"/><rect x="24.00" y="62.2" width="0.96" height="1.6" fill="#ffd700" opacity="0.45"/><rect x="24.96" y="62.2" width="3.84" height="1.6" fill="#569cd6" opacity="0.8"/><rect x="28.80" y="62.2" width="0.96" height="1.6" fill="#d4d4d4" opacity="0.3"/><rect x="30.72" y="62.2" width="0.96" height="1.6" fill="#d4d4d4" opacity="0.8"/><rect x="31.68" y="62.2" width="4.80" height="1.6" fill="#9cdcfe" opacity="0.62"/><rect x="36.48" y="62.2" width="0.96" height="1.6" fill="#9cdcfe" opacity="0.3"/><rect x="37.44" y="62.2" width="3.84" height="1.6" fill="#9cdcfe" opacity="0.62"/><rect x="41.28" y="62.2" width="0.96" height="1.6" fill="#ffd700" opacity="0.45"/><rect x="43.20" y="62.2" width="0.96" height="1.6" fill="#d4d4d4" opacity="0.45"/><rect x="44.16" y="62.2" width="0.96" height="1.6" fill="#d4d4d4" opacity="0.3"/><rect x="46.08" y="62.2" width="2.88" height="1.6" fill="#569cd6" opacity="0.8"/><rect x="48.96" y="62.2" width="0.96" height="1.6" fill="#569cd6" opacity="0.3"/><rect x="49.92" y="62.2" width="1.92" height="1.6" fill="#569cd6" opacity="0.8"/><rect x="51.84" y="62.2" width="0.96" height="1.6" fill="#ffd700" opacity="0.45"/><rect x="53.76" y="62.2" width="0.96" height="1.6" fill="#ffd700" opacity="0.45"/><rect x="7.68" y="64.2" width="5.76" height="1.6" fill="#dcdcaa" opacity="0.62"/><rect x="13.44" y="64.2" width="0.96" height="1.6" fill="#ffd700" opacity="0.45"/><rect x="14.40" y="64.2" width="0.96" height="1.6" fill="#ce9178" opacity="0.3"/><rect x="15.36" y="64.2" width="0.96" height="1.6" fill="#ce9178" opacity="0.8"/><rect x="16.32" y="64.2" width="1.92" height="1.6" fill="#ce9178" opacity="0.62"/><rect x="19.20" y="64.2" width="4.80" height="1.6" fill="#ce9178" opacity="0.62"/><rect x="24.96" y="64.2" width="3.84" height="1.6" fill="#ce9178" opacity="0.62"/><rect x="29.76" y="64.2" width="5.76" height="1.6" fill="#ce9178" opacity="0.62"/><rect x="35.52" y="64.2" width="0.96" height="1.6" fill="#ce9178" opacity="0.3"/><rect x="36.48" y="64.2" width="0.96" height="1.6" fill="#ffd700" opacity="0.45"/><rect x="37.44" y="64.2" width="0.96" height="1.6" fill="#d4d4d4" opacity="0.3"/><rect x="7.68" y="66.2" width="5.76" height="1.6" fill="#c586c0" opacity="0.62"/><rect x="13.44" y="66.2" width="0.96" height="1.6" fill="#d4d4d4" opacity="0.3"/><rect x="3.84" y="68.2" width="0.96" height="1.6" fill="#ffd700" opacity="0.45"/><rect x="3.84" y="72.2" width="5.76" height="1.6" fill="#dcdcaa" opacity="0.62"/><rect x="9.60" y="72.2" width="0.96" height="1.6" fill="#ffd700" opacity="0.45"/><rect x="10.56" y="72.2" width="0.96" height="1.6" fill="#ce9178" opacity="0.3"/><rect x="11.52" y="72.2" width="0.96" height="1.6" fill="#ce9178" opacity="0.8"/><rect x="12.48" y="72.2" width="0.96" height="1.6" fill="#ce9178" opacity="0.3"/><rect x="14.40" y="72.2" width="2.88" height="1.6" fill="#9cdcfe" opacity="0.8"/><rect x="17.28" y="72.2" width="0.96" height="1.6" fill="#9cdcfe" opacity="0.62"/><rect x="18.24" y="72.2" width="1.92" height="1.6" fill="#9cdcfe" opacity="0.8"/><rect x="21.12" y="72.2" width="0.96" height="1.6" fill="#ce9178" opacity="0.3"/><rect x="22.08" y="72.2" width="1.92" height="1.6" fill="#ce9178" opacity="0.8"/><rect x="24.96" y="72.2" width="0.96" height="1.6" fill="#ce9178" opacity="0.8"/><rect x="25.92" y="72.2" width="0.96" height="1.6" fill="#ce9178" opacity="0.62"/><rect x="27.84" y="72.2" width="4.80" height="1.6" fill="#ce9178" opacity="0.62"/><rect x="32.64" y="72.2" width="0.96" height="1.6" fill="#ce9178" opacity="0.45"/><rect x="33.60" y="72.2" width="0.96" height="1.6" fill="#ce9178" opacity="0.62"/><rect x="34.56" y="72.2" width="0.96" height="1.6" fill="#ce9178" opacity="0.3"/><rect x="35.52" y="72.2" width="0.96" height="1.6" fill="#d4d4d4" opacity="0.3"/><rect x="37.44" y="72.2" width="4.80" height="1.6" fill="#9cdcfe" opacity="0.62"/><rect x="42.24" y="72.2" width="0.96" height="1.6" fill="#9cdcfe" opacity="0.3"/><rect x="43.20" y="72.2" width="3.84" height="1.6" fill="#9cdcfe" opacity="0.62"/><rect x="48.00" y="72.2" width="0.96" height="1.6" fill="#d4d4d4" opacity="0.45"/><rect x="49.92" y="72.2" width="0.96" height="1.6" fill="#ffd700" opacity="0.45"/><rect x="50.88" y="72.2" width="3.84" height="1.6" fill="#4ec9b0" opacity="0.62"/><rect x="54.72" y="72.2" width="1.92" height="1.6" fill="#4ec9b0" opacity="0.8"/><rect x="56.64" y="72.2" width="0.96" height="1.6" fill="#4ec9b0" opacity="0.3"/><rect x="57.60" y="72.2" width="0.96" height="1.6" fill="#4ec9b0" opacity="0.62"/><rect x="58.56" y="72.2" width="0.96" height="1.6" fill="#ffd700" opacity="0.45"/><rect x="59.52" y="72.2" width="0.96" height="1.6" fill="#ffd700" opacity="0.45"/><rect x="60.48" y="72.2" width="3.84" height="1.6" fill="#b5cea8" opacity="0.8"/><rect x="65.28" y="72.2" width="0.96" height="1.6" fill="#d4d4d4" opacity="0.45"/><rect x="67.20" y="72.2" width="3.84" height="1.6" fill="#b5cea8" opacity="0.8"/><rect x="71.04" y="72.2" width="0.96" height="1.6" fill="#ffd700" opacity="0.45"/><rect x="72.00" y="72.2" width="0.96" height="1.6" fill="#d4d4d4" opacity="0.3"/><rect x="10.56" y="74.2" width="0.96" height="1.6" fill="#ffd700" opacity="0.45"/><rect x="11.52" y="74.2" width="3.84" height="1.6" fill="#9cdcfe" opacity="0.62"/><rect x="15.36" y="74.2" width="0.96" height="1.6" fill="#9cdcfe" opacity="0.3"/><rect x="16.32" y="74.2" width="3.84" height="1.6" fill="#9cdcfe" opacity="0.62"/><rect x="20.16" y="74.2" width="0.96" height="1.6" fill="#d4d4d4" opacity="0.3"/><rect x="21.12" y="74.2" width="7.68" height="1.6" fill="#9cdcfe" opacity="0.62"/><rect x="29.76" y="74.2" width="0.96" height="1.6" fill="#d4d4d4" opacity="0.8"/><rect x="31.68" y="74.2" width="3.84" height="1.6" fill="#569cd6" opacity="0.8"/><rect x="35.52" y="74.2" width="0.96" height="1.6" fill="#569cd6" opacity="0.3"/><rect x="36.48" y="74.2" width="6.72" height="1.6" fill="#569cd6" opacity="0.8"/><rect x="43.20" y="74.2" width="0.96" height="1.6" fill="#569cd6" opacity="0.3"/><rect x="44.16" y="74.2" width="2.88" height="1.6" fill="#569cd6" opacity="0.8"/><rect x="47.04" y="74.2" width="0.96" height="1.6" fill="#569cd6" opacity="0.3"/><rect x="48.00" y="74.2" width="4.80" height="1.6" fill="#569cd6" opacity="0.8"/><rect x="52.80" y="74.2" width="0.96" height="1.6" fill="#ffd700" opacity="0.45"/><rect x="54.72" y="74.2" width="0.96" height="1.6" fill="#d4d4d4" opacity="0.45"/><rect x="56.64" y="74.2" width="0.96" height="1.6" fill="#ce9178" opacity="0.3"/><rect x="57.60" y="74.2" width="7.68" height="1.6" fill="#ce9178" opacity="0.62"/><rect x="65.28" y="74.2" width="0.96" height="1.6" fill="#ce9178" opacity="0.3"/><rect x="67.20" y="74.2" width="0.96" height="1.6" fill="#d4d4d4" opacity="0.3"/><rect x="69.12" y="74.2" width="0.96" height="1.6" fill="#ce9178" opacity="0.3"/><rect x="70.08" y="74.2" width="7.68" height="1.6" fill="#ce9178" opacity="0.62"/><rect x="77.76" y="74.2" width="0.96" height="1.6" fill="#ce9178" opacity="0.3"/><rect x="78.72" y="74.2" width="0.96" height="1.6" fill="#ffd700" opacity="0.45"/><rect x="79.68" y="74.2" width="0.96" height="1.6" fill="#d4d4d4" opacity="0.3"/><rect x="3.84" y="78.2" width="5.76" height="1.6" fill="#dcdcaa" opacity="0.62"/><rect x="9.60" y="78.2" width="0.96" height="1.6" fill="#ffd700" opacity="0.45"/><rect x="10.56" y="78.2" width="0.96" height="1.6" fill="#ce9178" opacity="0.3"/><rect x="11.52" y="78.2" width="0.96" height="1.6" fill="#ce9178" opacity="0.8"/><rect x="12.48" y="78.2" width="5.76" height="1.6" fill="#ce9178" opacity="0.62"/><rect x="19.20" y="78.2" width="3.84" height="1.6" fill="#ce9178" opacity="0.62"/><rect x="24.00" y="78.2" width="3.84" height="1.6" fill="#ce9178" opacity="0.62"/><rect x="28.80" y="78.2" width="3.84" height="1.6" fill="#ce9178" opacity="0.62"/><rect x="32.64" y="78.2" width="0.96" height="1.6" fill="#ce9178" opacity="0.3"/><rect x="34.56" y="78.2" width="0.96" height="1.6" fill="#ce9178" opacity="0.8"/><rect x="35.52" y="78.2" width="0.96" height="1.6" fill="#ce9178" opacity="0.3"/><rect x="37.44" y="78.2" width="2.88" height="1.6" fill="#9cdcfe" opacity="0.8"/><rect x="40.32" y="78.2" width="0.96" height="1.6" fill="#9cdcfe" opacity="0.62"/><rect x="41.28" y="78.2" width="1.92" height="1.6" fill="#9cdcfe" opacity="0.8"/><rect x="44.16" y="78.2" width="0.96" height="1.6" fill="#ce9178" opacity="0.3"/><rect x="46.08" y="78.2" width="4.80" height="1.6" fill="#ce9178" opacity="0.62"/><rect x="50.88" y="78.2" width="0.96" height="1.6" fill="#ce9178" opacity="0.45"/><rect x="51.84" y="78.2" width="0.96" height="1.6" fill="#ce9178" opacity="0.62"/><rect x="52.80" y="78.2" width="0.96" height="1.6" fill="#ce9178" opacity="0.3"/><rect x="53.76" y="78.2" width="0.96" height="1.6" fill="#d4d4d4" opacity="0.3"/><rect x="55.68" y="78.2" width="2.88" height="1.6" fill="#dcdcaa" opacity="0.62"/><rect x="58.56" y="78.2" width="0.96" height="1.6" fill="#dcdcaa" opacity="0.3"/><rect x="59.52" y="78.2" width="2.88" height="1.6" fill="#dcdcaa" opacity="0.62"/><rect x="62.40" y="78.2" width="0.96" height="1.6" fill="#dcdcaa" opacity="0.3"/><rect x="63.36" y="78.2" width="6.72" height="1.6" fill="#dcdcaa" opacity="0.62"/><rect x="70.08" y="78.2" width="0.96" height="1.6" fill="#dcdcaa" opacity="0.3"/><rect x="71.04" y="78.2" width="3.84" height="1.6" fill="#dcdcaa" opacity="0.62"/><rect x="74.88" y="78.2" width="0.96" height="1.6" fill="#dcdcaa" opacity="0.3"/><rect x="75.84" y="78.2" width="3.84" height="1.6" fill="#dcdcaa" opacity="0.62"/><rect x="79.68" y="78.2" width="0.96" height="1.6" fill="#dcdcaa" opacity="0.3"/><rect x="80.64" y="78.2" width="3.84" height="1.6" fill="#dcdcaa" opacity="0.62"/><rect x="84.48" y="78.2" width="0.96" height="1.6" fill="#ffd700" opacity="0.45"/><rect x="85.44" y="78.2" width="0.96" height="1.6" fill="#ffd700" opacity="0.45"/><rect x="86.40" y="78.2" width="0.96" height="1.6" fill="#ffd700" opacity="0.45"/><rect x="87.36" y="78.2" width="0.96" height="1.6" fill="#d4d4d4" opacity="0.3"/><rect x="3.84" y="82.2" width="2.88" height="1.6" fill="#c586c0" opacity="0.62"/><rect x="7.68" y="82.2" width="0.96" height="1.6" fill="#ffd700" opacity="0.45"/><rect x="8.64" y="82.2" width="2.88" height="1.6" fill="#569cd6" opacity="0.62"/><rect x="12.48" y="82.2" width="0.96" height="1.6" fill="#9cdcfe" opacity="0.62"/><rect x="14.40" y="82.2" width="0.96" height="1.6" fill="#d4d4d4" opacity="0.3"/><rect x="16.32" y="82.2" width="1.92" height="1.6" fill="#b5cea8" opacity="0.8"/><rect x="18.24" y="82.2" width="0.96" height="1.6" fill="#d4d4d4" opacity="0.3"/><rect x="20.16" y="82.2" width="0.96" height="1.6" fill="#9cdcfe" opacity="0.62"/><rect x="22.08" y="82.2" width="0.96" height="1.6" fill="#d4d4d4" opacity="0.45"/><rect x="23.04" y="82.2" width="0.96" height="1.6" fill="#d4d4d4" opacity="0.3"/><rect x="24.96" y="82.2" width="0.96" height="1.6" fill="#b5cea8" opacity="0.8"/><rect x="25.92" y="82.2" width="0.96" height="1.6" fill="#d4d4d4" opacity="0.3"/><rect x="27.84" y="82.2" width="0.96" height="1.6" fill="#9cdcfe" opacity="0.62"/><rect x="28.80" y="82.2" width="0.96" height="1.6" fill="#d4d4d4" opacity="0.3"/><rect x="29.76" y="82.2" width="0.96" height="1.6" fill="#d4d4d4" opacity="0.3"/><rect x="30.72" y="82.2" width="0.96" height="1.6" fill="#ffd700" opacity="0.45"/><rect x="32.64" y="82.2" width="0.96" height="1.6" fill="#ffd700" opacity="0.45"/><rect x="7.68" y="84.2" width="5.76" height="1.6" fill="#dcdcaa" opacity="0.62"/><rect x="13.44" y="84.2" width="0.96" height="1.6" fill="#ffd700" opacity="0.45"/><rect x="14.40" y="84.2" width="0.96" height="1.6" fill="#ce9178" opacity="0.3"/><rect x="15.36" y="84.2" width="0.96" height="1.6" fill="#ce9178" opacity="0.8"/><rect x="16.32" y="84.2" width="8.64" height="1.6" fill="#ce9178" opacity="0.62"/><rect x="25.92" y="84.2" width="1.92" height="1.6" fill="#ce9178" opacity="0.62"/><rect x="28.80" y="84.2" width="0.96" height="1.6" fill="#ce9178" opacity="0.8"/><rect x="29.76" y="84.2" width="0.96" height="1.6" fill="#ce9178" opacity="0.62"/><rect x="31.68" y="84.2" width="6.72" height="1.6" fill="#ce9178" opacity="0.62"/><rect x="38.40" y="84.2" width="2.88" height="1.6" fill="#ce9178" opacity="0.3"/><rect x="41.28" y="84.2" width="0.96" height="1.6" fill="#ce9178" opacity="0.45"/><rect x="42.24" y="84.2" width="0.96" height="1.6" fill="#ce9178" opacity="0.62"/><rect x="43.20" y="84.2" width="0.96" height="1.6" fill="#ce9178" opacity="0.3"/><rect x="44.16" y="84.2" width="0.96" height="1.6" fill="#d4d4d4" opacity="0.3"/><rect x="46.08" y="84.2" width="0.96" height="1.6" fill="#9cdcfe" opacity="0.62"/><rect x="47.04" y="84.2" width="0.96" height="1.6" fill="#ffd700" opacity="0.45"/><rect x="48.00" y="84.2" width="0.96" height="1.6" fill="#d4d4d4" opacity="0.3"/><rect x="7.68" y="86.2" width="0.96" height="1.6" fill="#dcdcaa" opacity="0.62"/><rect x="8.64" y="86.2" width="0.96" height="1.6" fill="#dcdcaa" opacity="0.8"/><rect x="9.60" y="86.2" width="2.88" height="1.6" fill="#dcdcaa" opacity="0.62"/><rect x="12.48" y="86.2" width="0.96" height="1.6" fill="#dcdcaa" opacity="0.8"/><rect x="13.44" y="86.2" width="3.84" height="1.6" fill="#dcdcaa" opacity="0.62"/><rect x="17.28" y="86.2" width="0.96" height="1.6" fill="#ffd700" opacity="0.45"/><rect x="18.24" y="86.2" width="3.84" height="1.6" fill="#b5cea8" opacity="0.8"/><rect x="23.04" y="86.2" width="0.96" height="1.6" fill="#d4d4d4" opacity="0.45"/><rect x="24.96" y="86.2" width="3.84" height="1.6" fill="#9cdcfe" opacity="0.62"/><rect x="28.80" y="86.2" width="3.84" height="1.6" fill="#9cdcfe" opacity="0.8"/><rect x="32.64" y="86.2" width="0.96" height="1.6" fill="#9cdcfe" opacity="0.3"/><rect x="33.60" y="86.2" width="5.76" height="1.6" fill="#9cdcfe" opacity="0.8"/><rect x="39.36" y="86.2" width="0.96" height="1.6" fill="#9cdcfe" opacity="0.3"/><rect x="40.32" y="86.2" width="1.92" height="1.6" fill="#9cdcfe" opacity="0.8"/><rect x="42.24" y="86.2" width="0.96" height="1.6" fill="#ffd700" opacity="0.45"/><rect x="43.20" y="86.2" width="0.96" height="1.6" fill="#d4d4d4" opacity="0.3"/><rect x="3.84" y="88.2" width="0.96" height="1.6" fill="#ffd700" opacity="0.45"/><rect x="3.84" y="90.2" width="5.76" height="1.6" fill="#dcdcaa" opacity="0.62"/><rect x="9.60" y="90.2" width="0.96" height="1.6" fill="#ffd700" opacity="0.45"/><rect x="10.56" y="90.2" width="0.96" height="1.6" fill="#ce9178" opacity="0.3"/><rect x="11.52" y="90.2" width="0.96" height="1.6" fill="#ce9178" opacity="0.8"/><rect x="12.48" y="90.2" width="8.64" height="1.6" fill="#ce9178" opacity="0.62"/><rect x="22.08" y="90.2" width="2.88" height="1.6" fill="#ce9178" opacity="0.62"/><rect x="24.96" y="90.2" width="0.96" height="1.6" fill="#ce9178" opacity="0.3"/><rect x="25.92" y="90.2" width="0.96" height="1.6" fill="#ce9178" opacity="0.45"/><rect x="26.88" y="90.2" width="0.96" height="1.6" fill="#ce9178" opacity="0.62"/><rect x="27.84" y="90.2" width="0.96" height="1.6" fill="#ce9178" opacity="0.3"/><rect x="28.80" y="90.2" width="0.96" height="1.6" fill="#ffd700" opacity="0.45"/><rect x="29.76" y="90.2" width="0.96" height="1.6" fill="#d4d4d4" opacity="0.3"/><rect x="3.84" y="92.2" width="5.76" height="1.6" fill="#dcdcaa" opacity="0.62"/><rect x="9.60" y="92.2" width="0.96" height="1.6" fill="#ffd700" opacity="0.45"/><rect x="10.56" y="92.2" width="5.76" height="1.6" fill="#9cdcfe" opacity="0.62"/><rect x="16.32" y="92.2" width="0.96" height="1.6" fill="#ffd700" opacity="0.45"/><rect x="17.28" y="92.2" width="0.96" height="1.6" fill="#d4d4d4" opacity="0.3"/><rect x="3.84" y="94.2" width="2.88" height="1.6" fill="#dcdcaa" opacity="0.62"/><rect x="6.72" y="94.2" width="0.96" height="1.6" fill="#dcdcaa" opacity="0.3"/><rect x="7.68" y="94.2" width="6.72" height="1.6" fill="#dcdcaa" opacity="0.62"/><rect x="14.40" y="94.2" width="0.96" height="1.6" fill="#ffd700" opacity="0.45"/><rect x="15.36" y="94.2" width="0.96" height="1.6" fill="#ffd700" opacity="0.45"/><rect x="16.32" y="94.2" width="0.96" height="1.6" fill="#d4d4d4" opacity="0.3"/><rect x="0.00" y="96.2" width="0.96" height="1.6" fill="#ffd700" opacity="0.45"/></svg>
</div>
<div class="abs" style="left:1015px;top:97px;width:14px;height:106px;background:#424242;"></div>
<div class="abs" style="left:1015px;top:97px;width:1px;height:373px;background:#3a3a3a;"></div>
<div class="abs" style="left:245px;top:470px;width:784px;height:282px;background:#1e1e1e;"></div>
<div class="abs" style="left:245px;top:470px;width:784px;height:1px;background:#414141;"></div>
<span class="t" style="left:265.00px;top:481.7px;font-size:11px;line-height:15px;letter-spacing:-0.300px;color:#969696;transform:scaleX(0.9098);">PROBLEMS</span>
<span class="t" style="left:342.90px;top:481.7px;font-size:11px;line-height:15px;letter-spacing:-0.300px;color:#969696;transform:scaleX(0.9295);">OUTPUT</span>
<span class="t" style="left:407.80px;top:481.7px;font-size:11px;line-height:15px;letter-spacing:-0.300px;color:#e7e7e7;transform:scaleX(0.9663);">TERMINAL</span>
<div class="abs" style="left:406px;top:501px;width:55px;height:1px;background:#e7e7e7;"></div>
<span class="t" style="left:483.90px;top:481.7px;font-size:11px;line-height:15px;letter-spacing:-0.300px;color:#969696;transform:scaleX(0.9182);">MEMORY</span>
<span class="t" style="left:552.80px;top:481.7px;font-size:11px;line-height:15px;letter-spacing:-0.300px;color:#969696;transform:scaleX(0.9038);">XRTOS</span>
<span class="t" style="left:608.90px;top:481.7px;font-size:11px;line-height:15px;letter-spacing:-0.300px;color:#969696;transform:scaleX(0.9280);">DEBUG CONSOLE</span>
<svg style="left:715px;top:481.5px" width="16.5" height="16.5" viewBox="0 0 17 17" fill="none" stroke="#c5c5c5" stroke-width="1.1" stroke-linecap="round" stroke-linejoin="round"><path d="M1.5 1.2L4.2 2.6L4.6 4.6L11.4 11.4"/><path d="M13.6 11.2L11.2 13.6L13 15.4Q14.2 16 15.2 15.2Q16 14.2 15.4 13Z" /><path d="M1.4 13.2L8.2 6.4Q7.4 3.6 9.4 1.8Q11.2 .4 13.2 1.2L10.6 3.8L11 6L13.2 6.4L15.8 3.8Q16.6 5.8 15.2 7.6Q13.4 9.6 10.6 8.8L3.8 15.6Q2.6 16.4 1.6 15.6Q.6 14.4 1.4 13.2Z"/></svg>
<span class="t" style="left:734.90px;top:480.5px;font-size:12px;line-height:17px;letter-spacing:-0.300px;color:#cccccc;transform:scaleX(0.8880);">ESP-IDF Build - Task</span>
<svg style="left:843px;top:482px" width="8" height="14" viewBox="0 0 8 14" fill="none" stroke="#c5c5c5" stroke-width="1.2" stroke-linecap="round" stroke-linejoin="round"><path d="M1.2 .8Q7 2.2 7 7Q7 11.8 1.2 13.2"/></svg>
<svg style="left:861.5px;top:482px" width="14" height="14" viewBox="0 0 14 14" fill="none" stroke="#c5c5c5" stroke-width="1.1" stroke-linecap="butt" stroke-linejoin="round"><path d="M7 0V14M0 7H14"/></svg>
<svg style="left:881px;top:486.5px" width="8" height="5" viewBox="0 0 8 5" fill="none" stroke="#c5c5c5" stroke-width="1" stroke-linecap="round" stroke-linejoin="round"><path d="M.5 .5L4 4L7.5 .5"/></svg>
<svg style="left:902px;top:482px" width="13" height="13" viewBox="0 0 13 13" fill="none" stroke="#c5c5c5" stroke-width="1" stroke-linecap="round" stroke-linejoin="round"><rect x=".5" y=".5" width="12" height="12" rx="1"/><path d="M6.5 .5V12.5"/></svg>
<svg style="left:928px;top:482px" width="11" height="13" viewBox="0 0 11 13" fill="none" stroke="#c5c5c5" stroke-width="1" stroke-linecap="round" stroke-linejoin="round"><path d="M.5 2.5H10.5M3.8 2.3V.6H7.2V2.3M1.5 2.7V11.6Q1.5 12.5 2.4 12.5H8.6Q9.5 12.5 9.5 11.6V2.7M4 5V10.5M5.5 5V10.5M7 5V10.5"/></svg>
<svg style="left:953px;top:487.5px" width="13" height="3" viewBox="0 0 13 3" fill="#c5c5c5" stroke="none" stroke-width="1" stroke-linecap="round" stroke-linejoin="round"><circle cx="1.5" cy="1.5" r="1.1"/><circle cx="6.5" cy="1.5" r="1.1"/><circle cx="11.5" cy="1.5" r="1.1"/></svg>
<svg style="left:980.5px;top:485px" width="10" height="6" viewBox="0 0 10 6" fill="none" stroke="#c5c5c5" stroke-width="1.1" stroke-linecap="round" stroke-linejoin="round"><path d="M.5 5.5L5 1L9.5 5.5"/></svg>
<svg style="left:1006.5px;top:483.5px" width="10" height="10" viewBox="0 0 10 10" fill="none" stroke="#c5c5c5" stroke-width="1.1" stroke-linecap="butt" stroke-linejoin="round"><path d="M0 0L10 10M10 0L0 10"/></svg>
<pre id="term">[103/106] Linking C static library esp-idf\main\libmain.a
[104/106] Linking C executable bootloader.elf
[105/106] Generating binary image from built executable
esptool.py v4.5.1
Creating esp32s3 image...
Merged 1 ELF section
Successfully created esp32s3 image.
Generated E:/esp32-s3-example/hello_world/build/bootloader/bootloader.bin
[106/106] cmd.exe /C &quot;cd /D E:\esp32-s3-example\hello_world\build\bootloader\esp-idf\esptool_py &amp;&amp; e:\
idf5\tool\python_env\idf5.0_py3.8_env\Scripts\python.exe E:/esp32-s3-example/idf5/esp-idf/components/parti
able/check_sizes.py --offset 0x8000 bootloader 0x0 E:/esp32-s3-example/hello_world/build/bootloader/bootlo
ader.bin&quot;
Bootloader binary size 0x5180 bytes. 0x2e80 bytes (36%) free.
[655/883] Building C object esp-idf/efuse/CMakeFiles/__idf_efuse.dir/esp32s3/esp_efuse_table.c.obj</pre>
<div class="abs" style="left:265px;top:735px;width:7px;height:16px;border:1px solid #cccccc"></div>
<div class="abs" style="left:1019px;top:512px;width:3px;height:3px;background:#6e6e6e;"></div>
<div class="abs" style="left:1019px;top:732px;width:10px;height:20px;background:#4d4d4d;"></div>
<svg style="left:17px;top:758px" width="10" height="11" viewBox="0 0 10 11" fill="none" stroke="#ffffff" stroke-width="1.2" stroke-linecap="round" stroke-linejoin="round"><path d="M.6 4.8L3.7 7.8L.6 10.6M9.1 .5L5.9 3.1L9.1 5.9"/></svg>
<svg style="left:50px;top:757.5px" width="8" height="12" viewBox="0 0 8 12" fill="none" stroke="#ffffff" stroke-width="1.2" stroke-linecap="round" stroke-linejoin="round"><path d="M2.2 .5V3M5.8 .5V3M4 8.8V11.5"/><path d="M.8 3.2H7.2V6Q7.2 8.6 4 8.6Q.8 8.6 .8 6Z" fill="#fff" fill-opacity=".55"/></svg>
<span class="t" style="left:64.90px;top:756.3px;font-size:12px;line-height:17px;letter-spacing:-0.300px;color:#ffffff;transform:scaleX(0.9591);">COM5</span>
<svg style="left:114.5px;top:756.5px" width="13" height="13" viewBox="0 0 13 13" fill="none" stroke="#ffffff" stroke-width="1" stroke-linecap="round" stroke-linejoin="round"><rect x=".6" y=".6" width="11.8" height="11.8" rx="1"/><rect x="2.8" y="2.6" width="2.4" height="2"/><rect x="7.4" y="2.6" width="3" height="2"/><rect x="2.8" y="8" width="2.4" height="2.4"/><circle cx="8.8" cy="8.6" r="1.6"/><path d="M5.2 6.2H7.4"/></svg>
<span class="t" style="left:131.30px;top:756.3px;font-size:12px;line-height:17px;letter-spacing:-0.300px;color:#ffffff;transform:scaleX(0.9728);">esp32s3</span>
<svg style="left:190.5px;top:757.5px" width="14" height="12" viewBox="0 0 14 12" fill="none" stroke="#ffffff" stroke-width="1.1" stroke-linecap="round" stroke-linejoin="round"><path d="M.6 9V.6H5.2L6.4 2H11.4V4.2M2.6 4.2H13.4V11.4H2.6ZM2.6 6.4H7L8 5.2"/></svg>
<svg style="left:221px;top:757px" width="13" height="13" viewBox="0 0 13 13" fill="none" stroke="#ffffff" stroke-width="1.2" stroke-linecap="round" stroke-linejoin="round"><path d="M10.85 5.35L12.60 5.41L12.60 7.59L10.85 7.65L10.39 8.76L11.58 10.05L10.05 11.58L8.76 10.39L7.65 10.85L7.59 12.60L5.41 12.60L5.35 10.85L4.24 10.39L2.95 11.58L1.42 10.05L2.61 8.76L2.15 7.65L0.40 7.59L0.40 5.41L2.15 5.35L2.61 4.24L1.42 2.95L2.95 1.42L4.24 2.61L5.35 2.15L5.41 0.40L7.59 0.40L7.65 2.15L8.76 2.61L10.05 1.42L11.58 2.95L10.39 4.24Z"/><circle cx="6.5" cy="6.5" r="1.9"/></svg>
<svg style="left:251.5px;top:757px" width="10.5" height="12.5" viewBox="0 0 11 13" fill="none" stroke="#ffffff" stroke-width="1.1" stroke-linecap="round" stroke-linejoin="round"><path d="M.5 2.5H10.5M3.8 2.3V.6H7.2V2.3M1.5 2.7V11.6Q1.5 12.5 2.4 12.5H8.6Q9.5 12.5 9.5 11.6V2.7M4 5V10.5M5.5 5V10.5M7 5V10.5"/></svg>
<svg style="left:282.5px;top:757px" width="9.5" height="12.5" viewBox="0 0 10 13" fill="none" stroke="#ffffff" stroke-width="1.2" stroke-linecap="round" stroke-linejoin="round"><ellipse cx="5" cy="2.6" rx="4.2" ry="2"/><path d="M.8 2.6V10.4Q.8 12.4 5 12.4Q9.2 12.4 9.2 10.4V2.6"/></svg>
<svg style="left:311px;top:757px" width="12" height="12" viewBox="0 0 12 12" fill="none" stroke="none" stroke-width="1" stroke-linecap="round" stroke-linejoin="round"><path d="M6.00 0.40L7.47 4.38L11.71 4.55L8.38 7.17L9.53 11.25L6.00 8.90L2.47 11.25L3.62 7.17L0.29 4.55L4.53 4.38Z" fill="#fff" stroke="none"/></svg>
<span class="t" style="left:327.90px;top:756.3px;font-size:12px;line-height:17px;letter-spacing:-0.300px;color:#ffffff;transform:scaleX(0.8628);">UART</span>
<svg style="left:375px;top:756.5px" width="9" height="14" viewBox="0 0 9 14" fill="none" stroke="#ffffff" stroke-width="1.1" stroke-linecap="round" stroke-linejoin="round"><path d="M5.4 .8H8.2L5.8 5.2H8L2.2 13L3.6 7.4H1.2Z"/></svg>
<svg style="left:402.5px;top:757.5px" width="14" height="12" viewBox="0 0 14 12" fill="none" stroke="#ffffff" stroke-width="1.2" stroke-linecap="round" stroke-linejoin="round"><rect x=".6" y=".6" width="12.8" height="8.6" rx=".6"/><path d="M4 11.4H10M7 9.4V11.2"/></svg>
<svg style="left:434.5px;top:756.5px" width="10" height="13.5" viewBox="0 0 10 13.5" fill="none" stroke="#ffffff" stroke-width="1.05" stroke-linecap="round" stroke-linejoin="round"><path d="M5.2 .6Q6.4 3 8 5.2Q9.4 7.2 9.2 9Q8.8 12.6 5 12.8Q1 12.6 .8 8.8Q.8 6.6 2.6 4.8Q2.6 6.6 3.8 7Q3.6 3.2 5.2 .6Z"/><path d="M5 12.6Q3.4 11.6 4.2 9.8Q4.8 8.6 5.2 8Q5.8 9 6.4 10Q7 11.6 5 12.6"/></svg>
<svg style="left:462.5px;top:757px" width="13" height="13" viewBox="0 0 13 13" fill="none" stroke="#ffffff" stroke-width="1.2" stroke-linecap="round" stroke-linejoin="round"><rect x=".6" y=".6" width="11.8" height="11.8" rx=".6"/><path d="M4.4 3.6L7.6 6.5L4.4 9.4"/></svg>
<svg style="left:492.5px;top:757px" width="13" height="13" viewBox="0 0 13 13" fill="none" stroke="#ffffff" stroke-width="1.1" stroke-linecap="round" stroke-linejoin="round"><rect x=".6" y=".6" width="11.8" height="11.8" rx=".6"/><path d="M3 5.4H6.6V3.4L10 6.5L6.6 9.6V7.6H3Z" fill="#fff"/></svg>
<svg style="left:522px;top:756.5px" width="14" height="14" viewBox="0 0 14 14" fill="none" stroke="#ffffff" stroke-width="1.1" stroke-linecap="round" stroke-linejoin="round"><circle cx="7" cy="7" r="6.2"/><path d="M4.6 4.6L9.4 9.4M9.4 4.6L4.6 9.4"/></svg>
<span class="t" style="left:538.95px;top:756.3px;font-size:12px;line-height:17px;letter-spacing:0.000px;color:#ffffff;">0</span>
<svg style="left:550px;top:757px" width="12.5" height="12.5" viewBox="0 0 13 13" fill="none" stroke="#ffffff" stroke-width="1.1" stroke-linecap="round" stroke-linejoin="round"><path d="M6.5 1L12.4 12.2H.6Z"/><path d="M6.5 5V8.6M6.5 10V10.6"/></svg>
<span class="t" style="left:566.35px;top:756.3px;font-size:12px;line-height:17px;letter-spacing:0.000px;color:#ffffff;">0</span>
<svg style="left:589.5px;top:756.5px" width="14" height="14" viewBox="0 0 17 17" fill="none" stroke="#ffffff" stroke-width="1.3" stroke-linecap="round" stroke-linejoin="round"><path d="M1.5 1.2L4.2 2.6L4.6 4.6L11.4 11.4"/><path d="M13.6 11.2L11.2 13.6L13 15.4Q14.2 16 15.2 15.2Q16 14.2 15.4 13Z" /><path d="M1.4 13.2L8.2 6.4Q7.4 3.6 9.4 1.8Q11.2 .4 13.2 1.2L10.6 3.8L11 6L13.2 6.4L15.8 3.8Q16.6 5.8 15.2 7.6Q13.4 9.6 10.6 8.8L3.8 15.6Q2.6 16.4 1.6 15.6Q.6 14.4 1.4 13.2Z"/></svg>
<span class="t" style="left:605.80px;top:756.3px;font-size:12px;line-height:17px;letter-spacing:0.000px;color:#ffffff;">1</span>
<span class="t" style="left:678.10px;top:756.3px;font-size:12px;line-height:17px;letter-spacing:-0.300px;color:#ffffff;">Ln 1, Col 1</span>
<span class="t" style="left:749.30px;top:756.3px;font-size:12px;line-height:17px;letter-spacing:-0.300px;color:#ffffff;transform:scaleX(0.9533);">Spaces: 4</span>
<span class="t" style="left:814.40px;top:756.3px;font-size:12px;line-height:17px;letter-spacing:-0.300px;color:#ffffff;transform:scaleX(0.9631);">UTF-8</span>
<span class="t" style="left:862.50px;top:756.3px;font-size:12px;line-height:17px;letter-spacing:-0.300px;color:#ffffff;transform:scaleX(0.7627);">LF</span>
<span class="t" style="left:888.80px;top:756.3px;font-size:12px;line-height:17px;letter-spacing:0.000px;color:#ffffff;">C</span>
<span class="t" style="left:912.40px;top:756.3px;font-size:12px;line-height:17px;letter-spacing:-0.300px;color:#ffffff;transform:scaleX(0.9202);">ESP-IDF</span>
<svg style="left:970.5px;top:757px" width="13.5" height="13" viewBox="0 0 13.5 13" fill="none" stroke="#ffffff" stroke-width="1.1" stroke-linecap="round" stroke-linejoin="round"><path d="M5.2 4.6V.7H12.8V6.6H10.6L8.8 8.4V6.6"/><circle cx="4.6" cy="7" r="2.1"/><path d="M.7 12.6Q1 9.6 4.6 9.6Q8.2 9.6 8.5 12.6"/></svg>
<svg style="left:1001.5px;top:756.5px" width="12.5" height="14" viewBox="0 0 12.5 14" fill="none" stroke="#ffffff" stroke-width="1.1" stroke-linecap="round" stroke-linejoin="round"><path d="M7 1.6Q3 1.4 2.6 5.4V9.2L1 11.2H11.4L9.8 9.2V7.4M4.8 11.4Q6.2 13.6 7.6 11.4"/><circle cx="9.8" cy="3" r="2.4" fill="#fff" stroke="none"/></svg>
<div class="abs" style="left:566px;top:654px;width:452.5px;height:85.5px;background:#252526;box-shadow:0 0 5px rgba(0,0,0,.35),inset 0 0 4px 1px rgba(0,0,0,.35)"></div>
<div class="abs" style="left:566px;top:736.5px;width:91px;height:2.5px;background:#0e70c0;"></div>
<svg style="left:577px;top:668.5px" width="15" height="15" viewBox="0 0 15 15" fill="none" stroke="#3794ff" stroke-width="1.2" stroke-linecap="round" stroke-linejoin="round"><circle cx="7.5" cy="7.5" r="6.8"/><path d="M7.5 6.6V11"/><circle cx="7.5" cy="4.3" r=".9" fill="#3794ff" stroke="none"/></svg>
<span class="t" style="left:597.60px;top:667.6px;font-size:13px;line-height:18px;letter-spacing:-0.035px;color:#cccccc;">Building Project: Building project...</span>
<svg style="left:990px;top:669px" width="14.5" height="14.5" viewBox="0 0 15 15" fill="none" stroke="#c5c5c5" stroke-width="1.15" stroke-linecap="round" stroke-linejoin="round"><path d="M12.43 6.19L14.49 6.26L14.49 8.74L12.43 8.81L11.91 10.06L13.32 11.56L11.56 13.32L10.06 11.91L8.81 12.43L8.74 14.49L6.26 14.49L6.19 12.43L4.94 11.91L3.44 13.32L1.68 11.56L3.09 10.06L2.57 8.81L0.51 8.74L0.51 6.26L2.57 6.19L3.09 4.94L1.68 3.44L3.44 1.68L4.94 3.09L6.19 2.57L6.26 0.51L8.74 0.51L8.81 2.57L10.06 3.09L11.56 1.68L13.32 3.44L11.91 4.94Z"/><circle cx="7.5" cy="7.5" r="2.1"/></svg>
<span class="t" style="left:577.50px;top:704.1px;font-size:12px;line-height:17px;letter-spacing:-0.300px;color:#c0c0c0;transform:scaleX(0.9876);">Source: Espressif IDF (Extension)</span>
<div class="abs" style="left:950px;top:697px;width:57px;height:28px;background:#0e639c;"></div>
<span class="t" style="left:961.50px;top:702.6px;font-size:13px;line-height:18px;letter-spacing:-0.300px;color:#ffffff;transform:scaleX(0.8777);">Cancel</span>
</body>
</html>
